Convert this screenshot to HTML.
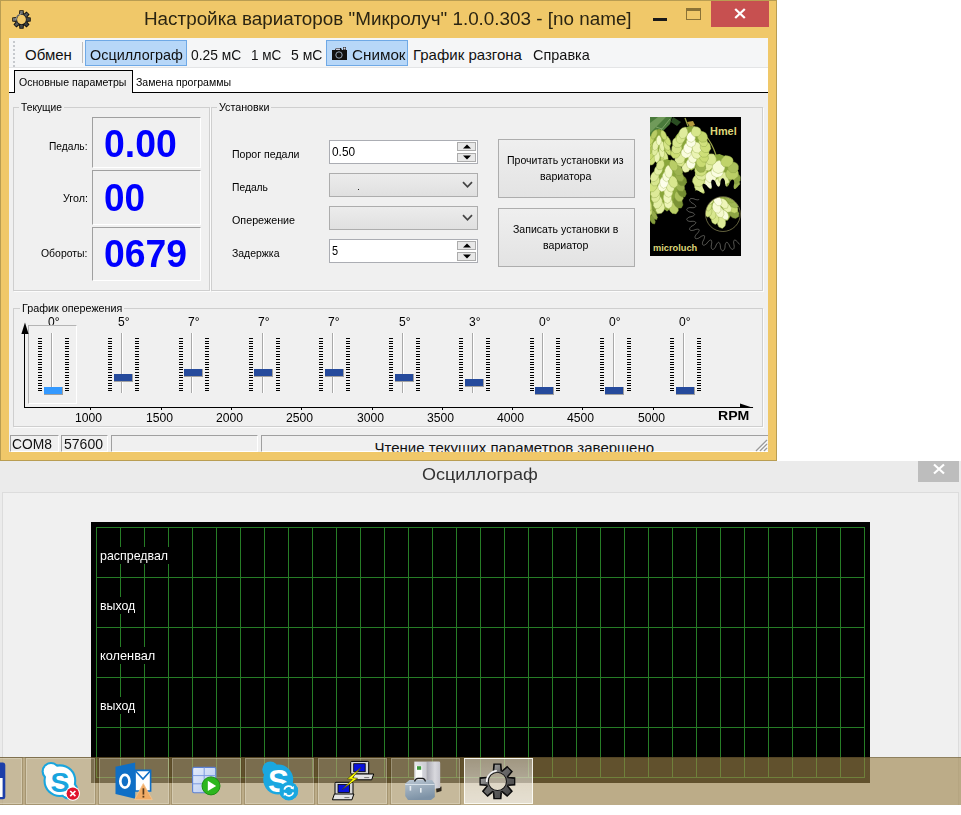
<!DOCTYPE html>
<html><head><meta charset="utf-8"><title>UI</title><style>
html,body{margin:0;padding:0;}
body{width:961px;height:815px;overflow:hidden;background:#fff;position:relative;font-family:"Liberation Sans",sans-serif;}
.b{position:absolute;box-sizing:border-box;}
.t{position:absolute;white-space:nowrap;transform-origin:0 0;font-family:"Liberation Sans",sans-serif;}
</style></head><body>
<div class="b" style="left:0px;top:461px;width:961px;height:354px;background:#EBEBEB;"></div>
<div class="b" style="left:2px;top:492px;width:957px;height:320px;background:#F0F0F0;border-top:1px solid #DCDCDC;border-left:1px solid #DCDCDC;border-right:1px solid #DCDCDC;"></div>
<span class="t" style="left:422.40px;top:466.32px;font-size:17.2px;line-height:17.2px;color:#333;transform:scaleX(1.0462);">Осциллограф</span>
<div class="b" style="left:918px;top:461px;width:41px;height:21px;background:#BDBDBD;"></div>
<svg class="b" style="left:932px;top:463px" width="14" height="12" viewBox="0 0 14 12"><path d="M2 1.5L12 10.5M12 1.5L2 10.5" stroke="#fff" stroke-width="2.2" fill="none"/></svg>
<div class="b" style="left:91px;top:522px;width:779px;height:261px;background:#000;"></div>
<svg class="b" style="left:91px;top:522px" width="779" height="261" viewBox="91 522 779 261" shape-rendering="crispEdges"><rect x="96" y="527" width="1" height="251" fill="#267D26"/><rect x="120" y="527" width="1" height="251" fill="#267D26"/><rect x="144" y="527" width="1" height="251" fill="#267D26"/><rect x="168" y="527" width="1" height="251" fill="#267D26"/><rect x="192" y="527" width="1" height="251" fill="#267D26"/><rect x="216" y="527" width="1" height="251" fill="#267D26"/><rect x="240" y="527" width="1" height="251" fill="#267D26"/><rect x="264" y="527" width="1" height="251" fill="#267D26"/><rect x="288" y="527" width="1" height="251" fill="#267D26"/><rect x="312" y="527" width="1" height="251" fill="#267D26"/><rect x="336" y="527" width="1" height="251" fill="#267D26"/><rect x="360" y="527" width="1" height="251" fill="#267D26"/><rect x="384" y="527" width="1" height="251" fill="#267D26"/><rect x="408" y="527" width="1" height="251" fill="#267D26"/><rect x="432" y="527" width="1" height="251" fill="#267D26"/><rect x="456" y="527" width="1" height="251" fill="#267D26"/><rect x="480" y="527" width="1" height="251" fill="#267D26"/><rect x="504" y="527" width="1" height="251" fill="#267D26"/><rect x="528" y="527" width="1" height="251" fill="#267D26"/><rect x="552" y="527" width="1" height="251" fill="#267D26"/><rect x="576" y="527" width="1" height="251" fill="#267D26"/><rect x="600" y="527" width="1" height="251" fill="#267D26"/><rect x="624" y="527" width="1" height="251" fill="#267D26"/><rect x="648" y="527" width="1" height="251" fill="#267D26"/><rect x="672" y="527" width="1" height="251" fill="#267D26"/><rect x="696" y="527" width="1" height="251" fill="#267D26"/><rect x="720" y="527" width="1" height="251" fill="#267D26"/><rect x="744" y="527" width="1" height="251" fill="#267D26"/><rect x="768" y="527" width="1" height="251" fill="#267D26"/><rect x="792" y="527" width="1" height="251" fill="#267D26"/><rect x="816" y="527" width="1" height="251" fill="#267D26"/><rect x="840" y="527" width="1" height="251" fill="#267D26"/><rect x="864" y="527" width="1" height="251" fill="#267D26"/><rect x="96" y="527" width="769" height="1" fill="#267D26"/><rect x="96" y="577" width="769" height="1" fill="#267D26"/><rect x="96" y="627" width="769" height="1" fill="#267D26"/><rect x="96" y="677" width="769" height="1" fill="#267D26"/><rect x="96" y="727" width="769" height="1" fill="#267D26"/><rect x="96" y="777" width="769" height="1" fill="#267D26"/></svg>
<div class="b" style="left:97px;top:547px;width:74.69999999999999px;height:17px;background:#000;"></div>
<span class="t" style="left:99.60px;top:548.84px;font-size:13.2px;line-height:13.2px;color:#fff;transform:scaleX(0.9409);">распредвал</span>
<div class="b" style="left:97px;top:597px;width:42px;height:17px;background:#000;"></div>
<span class="t" style="left:99.60px;top:598.84px;font-size:13.2px;line-height:13.2px;color:#fff;transform:scaleX(0.9377);">выход</span>
<div class="b" style="left:97px;top:647px;width:62px;height:17px;background:#000;"></div>
<span class="t" style="left:99.60px;top:648.84px;font-size:13.2px;line-height:13.2px;color:#fff;transform:scaleX(0.9677);">коленвал</span>
<div class="b" style="left:97px;top:697px;width:42px;height:17px;background:#000;"></div>
<span class="t" style="left:99.60px;top:698.84px;font-size:13.2px;line-height:13.2px;color:#fff;transform:scaleX(0.9377);">выход</span>
<div class="b" style="left:0px;top:0px;width:777px;height:461px;background:#F0C869;border:1px solid #B99D52;"></div>
<span class="t" style="left:144.10px;top:11.37px;font-size:17.5px;line-height:17.5px;color:#2a2412;transform:scaleX(1.0771);">Настройка вариаторов "Микролуч" 1.0.0.303 - [no name]</span>
<div class="b" style="left:653px;top:18px;width:14px;height:3px;background:#1a1a1a;"></div>
<div class="b" style="left:686px;top:8px;width:15px;height:12px;border:1px solid #8a7236;border-top:3px solid #8a7236;"></div>
<div class="b" style="left:711px;top:1px;width:58px;height:26px;background:#C75050;"></div>
<svg class="b" style="left:733px;top:7px" width="14" height="13" viewBox="0 0 14 13"><path d="M2.2 2L11.8 11M11.8 2L2.2 11" stroke="#fff" stroke-width="2.3" fill="none"/></svg>
<svg class="b" style="left:10.00px;top:7.90px" width="23.00" height="23.00" viewBox="10.00 7.90 23.00 23.00"><defs><linearGradient id="gg1" x1="0" y1="0" x2="1" y2="1"><stop offset="0" stop-color="#b0b4b4"/><stop offset="0.4" stop-color="#5a5e5e"/><stop offset="1" stop-color="#2a2c2c"/></linearGradient></defs><path d="M19.07 13.98 L19.39 10.14 L23.61 10.14 L23.93 13.98 L23.82 13.94 L23.72 13.89 L23.61 13.85 L26.56 11.36 L29.54 14.34 L27.05 17.29 L27.01 17.18 L26.96 17.08 L26.92 16.97 L30.76 17.29 L30.76 21.51 L26.92 21.83 L26.96 21.72 L27.01 21.62 L27.05 21.51 L29.54 24.46 L26.56 27.44 L23.61 24.95 L23.72 24.91 L23.82 24.86 L23.93 24.82 L23.61 28.66 L19.39 28.66 L19.07 24.82 L19.18 24.86 L19.28 24.91 L19.39 24.95 L16.44 27.44 L13.46 24.46 L15.95 21.51 L15.99 21.62 L16.04 21.72 L16.08 21.83 L12.24 21.51 L12.24 17.29 L16.08 16.97 L16.04 17.08 L15.99 17.18 L15.95 17.29 L17.30 15.20 L19.39 13.85 L19.28 13.89 L19.18 13.94ZM17.07 19.40a4.43 4.43 0 1 0 8.85 0a4.43 4.43 0 1 0 -8.85 0Z" fill="#0c0c0c" fill-rule="evenodd"/><path d="M19.97 14.18 L20.29 10.88 L22.71 10.88 L23.03 14.18 L23.40 14.30 L23.76 14.45 L24.11 14.63 L26.67 12.53 L28.37 14.23 L26.27 16.79 L26.45 17.14 L26.60 17.50 L26.72 17.87 L30.02 18.19 L30.02 20.61 L26.72 20.93 L26.60 21.30 L26.45 21.66 L26.27 22.01 L28.37 24.57 L26.67 26.27 L24.11 24.17 L23.76 24.35 L23.40 24.50 L23.03 24.62 L22.71 27.92 L20.29 27.92 L19.97 24.62 L19.60 24.50 L19.24 24.35 L18.89 24.17 L16.33 26.27 L14.63 24.57 L16.73 22.01 L16.55 21.66 L16.40 21.30 L16.28 20.93 L12.98 20.61 L12.98 18.19 L16.28 17.87 L16.40 17.50 L16.55 17.14 L16.73 16.79 L17.65 15.55 L18.89 14.63 L19.24 14.45 L19.60 14.30ZM16.53 19.40a4.97 4.97 0 1 0 9.93 0a4.97 4.97 0 1 0 -9.93 0Z" fill="url(#gg1)" fill-rule="evenodd"/><path d="M15.98 19.70A5.52 5.52 0 0 1 21.20 13.88" stroke="#fff" stroke-width="0.90" fill="none" opacity="0.55"/></svg>
<div class="b" style="left:9px;top:38px;width:759px;height:414px;background:#F0F0F0;"></div>
<div class="b" style="left:9px;top:38px;width:759px;height:30px;background:#F5F6F7;border-bottom:1px solid #E4E5E6;"></div>
<div class="b" style="left:13px;top:41px;width:2px;height:2px;background:#C6C9CD;"></div>
<div class="b" style="left:13px;top:45px;width:2px;height:2px;background:#C6C9CD;"></div>
<div class="b" style="left:13px;top:49px;width:2px;height:2px;background:#C6C9CD;"></div>
<div class="b" style="left:13px;top:53px;width:2px;height:2px;background:#C6C9CD;"></div>
<div class="b" style="left:13px;top:57px;width:2px;height:2px;background:#C6C9CD;"></div>
<div class="b" style="left:13px;top:61px;width:2px;height:2px;background:#C6C9CD;"></div>
<div class="b" style="left:13px;top:65px;width:2px;height:2px;background:#C6C9CD;"></div>
<div class="b" style="left:82px;top:42px;width:1px;height:21px;background:#BDBDBD;"></div>
<div class="b" style="left:85px;top:40px;width:102px;height:26px;background:#B7D7F8;border:1px solid #6FA9E6;"></div>
<div class="b" style="left:326px;top:40px;width:82px;height:26px;background:#B7D7F8;border:1px solid #6FA9E6;"></div>
<span class="t" style="left:25.00px;top:46.64px;font-size:15px;line-height:15px;color:#111;">Обмен</span>
<span class="t" style="left:90.30px;top:46.64px;font-size:15px;line-height:15px;color:#111;transform:scaleX(0.9594);">Осциллограф</span>
<span class="t" style="left:191.30px;top:46.64px;font-size:15px;line-height:15px;color:#111;transform:scaleX(0.9211);">0.25 мС</span>
<span class="t" style="left:251.40px;top:46.64px;font-size:15px;line-height:15px;color:#111;transform:scaleX(0.9011);">1 мС</span>
<span class="t" style="left:290.70px;top:46.64px;font-size:15px;line-height:15px;color:#111;transform:scaleX(0.9309);">5 мС</span>
<span class="t" style="left:351.50px;top:46.64px;font-size:15px;line-height:15px;color:#111;transform:scaleX(1.0156);">Снимок</span>
<span class="t" style="left:413.00px;top:46.64px;font-size:15px;line-height:15px;color:#111;">График разгона</span>
<span class="t" style="left:533.20px;top:46.64px;font-size:15px;line-height:15px;color:#111;transform:scaleX(0.9648);">Справка</span>
<svg class="b" style="left:331px;top:46px" width="17" height="15" viewBox="0 0 17 15"><path d="M1 4h3l1-2h5l1 2h1V1h3v3h1v10H1z" fill="#111"/><circle cx="8" cy="9" r="3.2" fill="#111" stroke="#9ab" stroke-width="1"/><rect x="12.5" y="1.5" width="2" height="2" fill="#dde"/><rect x="5" y="2.5" width="4" height="1.5" fill="#ccd"/></svg>
<div class="b" style="left:9px;top:68px;width:759px;height:24px;background:#fff;"></div>
<div class="b" style="left:14px;top:70px;width:119px;height:23px;background:#F0F0F0;border:1px solid #000;border-bottom:none;"></div>
<div class="b" style="left:9px;top:92px;width:6px;height:1px;background:#000;"></div>
<div class="b" style="left:132px;top:92px;width:636px;height:1px;background:#000;"></div>
<span class="t" style="left:19.00px;top:76.86px;font-size:11px;line-height:11px;color:#000;transform:scaleX(0.9591);">Основные параметры</span>
<span class="t" style="left:136.00px;top:76.86px;font-size:11px;line-height:11px;color:#000;transform:scaleX(0.9584);">Замена программы</span>
<div class="b" style="left:13px;top:107px;width:197px;height:184px;border:1px solid #CFCFCF;box-shadow:1px 1px 0 rgba(255,255,255,0.8);"></div>
<div class="b" style="left:19px;top:101px;width:45px;height:13px;background:#F0F0F0;"></div>
<span class="t" style="left:21.00px;top:101.86px;font-size:11px;line-height:11px;color:#000;transform:scaleX(0.9318);">Текущие</span>
<div class="b" style="left:211px;top:107px;width:552px;height:184px;border:1px solid #CFCFCF;box-shadow:1px 1px 0 rgba(255,255,255,0.8);"></div>
<div class="b" style="left:216.6px;top:101px;width:54.400000000000006px;height:13px;background:#F0F0F0;"></div>
<span class="t" style="left:218.60px;top:101.86px;font-size:11px;line-height:11px;color:#000;transform:scaleX(0.9739);">Установки</span>
<div class="b" style="left:13px;top:308px;width:750px;height:119px;border:1px solid #CFCFCF;box-shadow:1px 1px 0 rgba(255,255,255,0.8);"></div>
<div class="b" style="left:19.6px;top:302px;width:104.4px;height:13px;background:#F0F0F0;"></div>
<span class="t" style="left:21.60px;top:302.86px;font-size:11px;line-height:11px;color:#000;transform:scaleX(0.9783);">График опережения</span>
<div class="b" style="left:92px;top:117px;width:109px;height:51px;border-top:1px solid #A0A0A0;border-left:1px solid #A0A0A0;border-right:1px solid #fff;border-bottom:1px solid #fff;"></div>
<div class="b" style="left:92px;top:170px;width:109px;height:55px;border-top:1px solid #A0A0A0;border-left:1px solid #A0A0A0;border-right:1px solid #fff;border-bottom:1px solid #fff;"></div>
<div class="b" style="left:92px;top:227px;width:109px;height:54px;border-top:1px solid #A0A0A0;border-left:1px solid #A0A0A0;border-right:1px solid #fff;border-bottom:1px solid #fff;"></div>
<span class="t" style="left:104.40px;top:125.34px;font-size:38px;line-height:38px;color:#0000FF;font-weight:bold;transform:scaleX(0.9838);">0.00</span>
<span class="t" style="left:104.40px;top:179.04px;font-size:38px;line-height:38px;color:#0000FF;font-weight:bold;transform:scaleX(0.9704);">00</span>
<span class="t" style="left:104.40px;top:234.74px;font-size:38px;line-height:38px;color:#0000FF;font-weight:bold;transform:scaleX(0.9822);">0679</span>
<span class="t" style="left:49.00px;top:141.36px;font-size:11px;line-height:11px;color:#000;transform:scaleX(0.9277);">Педаль:</span>
<span class="t" style="left:62.60px;top:192.86px;font-size:11px;line-height:11px;color:#000;transform:scaleX(0.9717);">Угол:</span>
<span class="t" style="left:41.00px;top:247.86px;font-size:11px;line-height:11px;color:#000;transform:scaleX(0.9490);">Обороты:</span>
<span class="t" style="left:231.50px;top:149.16px;font-size:11px;line-height:11px;color:#000;transform:scaleX(0.9609);">Порог педали</span>
<span class="t" style="left:231.50px;top:181.86px;font-size:11px;line-height:11px;color:#000;transform:scaleX(0.9351);">Педаль</span>
<span class="t" style="left:231.50px;top:214.86px;font-size:11px;line-height:11px;color:#000;transform:scaleX(0.9767);">Опережение</span>
<span class="t" style="left:231.50px;top:247.86px;font-size:11px;line-height:11px;color:#000;transform:scaleX(0.9500);">Задержка</span>
<div class="b" style="left:329px;top:140px;width:149px;height:24px;background:#fff;border:1px solid #ABADB3;"></div>
<div class="b" style="left:457px;top:142px;width:19px;height:9px;background:#E8E8E8;border:1px solid #ACACAC;"></div>
<div class="b" style="left:457px;top:153px;width:19px;height:9px;background:#E8E8E8;border:1px solid #ACACAC;"></div>
<svg class="b" style="left:463px;top:144px" width="8" height="5" viewBox="0 0 8 5"><path d="M0 4.5L4 0.5L8 4.5Z" fill="#000"/></svg>
<svg class="b" style="left:463px;top:155px" width="8" height="5" viewBox="0 0 8 5"><path d="M0 0.5L4 4.5L8 0.5Z" fill="#000"/></svg>
<span class="t" style="left:332.40px;top:144.90px;font-size:13px;line-height:13px;color:#000;transform:scaleX(0.9109);">0.50</span>
<div class="b" style="left:329px;top:239px;width:149px;height:24px;background:#fff;border:1px solid #ABADB3;"></div>
<div class="b" style="left:457px;top:241px;width:19px;height:9px;background:#E8E8E8;border:1px solid #ACACAC;"></div>
<div class="b" style="left:457px;top:252px;width:19px;height:9px;background:#E8E8E8;border:1px solid #ACACAC;"></div>
<svg class="b" style="left:463px;top:243px" width="8" height="5" viewBox="0 0 8 5"><path d="M0 4.5L4 0.5L8 4.5Z" fill="#000"/></svg>
<svg class="b" style="left:463px;top:254px" width="8" height="5" viewBox="0 0 8 5"><path d="M0 0.5L4 4.5L8 0.5Z" fill="#000"/></svg>
<span class="t" style="left:332.40px;top:243.90px;font-size:13px;line-height:13px;color:#000;transform:scaleX(0.8414);">5</span>
<div class="b" style="left:329px;top:173px;width:149px;height:24px;background:linear-gradient(#ECECEC,#E0E0E0);border:1px solid #ADADAD;"></div>
<svg class="b" style="left:462px;top:181px" width="11" height="8" viewBox="0 0 11 8"><path d="M1 1.2L5.5 5.8L10 1.2" stroke="#444" stroke-width="1.7" fill="none"/></svg>
<div class="b" style="left:329px;top:206px;width:149px;height:24px;background:linear-gradient(#ECECEC,#E0E0E0);border:1px solid #ADADAD;"></div>
<svg class="b" style="left:462px;top:214px" width="11" height="8" viewBox="0 0 11 8"><path d="M1 1.2L5.5 5.8L10 1.2" stroke="#444" stroke-width="1.7" fill="none"/></svg>
<div class="b" style="left:358px;top:189px;width:1px;height:1px;background:#222;"></div>
<div class="b" style="left:498px;top:139px;width:137px;height:59px;background:linear-gradient(#EFEFEF,#E3E3E3);border:1px solid #ADADAD;"></div>
<span class="t" style="left:507.30px;top:155.46px;font-size:11px;line-height:11px;color:#000;transform:scaleX(0.9588);">Прочитать установки из</span>
<span class="t" style="left:540.40px;top:171.16px;font-size:11px;line-height:11px;color:#000;transform:scaleX(0.9653);">вариатора</span>
<div class="b" style="left:498px;top:208px;width:137px;height:59px;background:linear-gradient(#EFEFEF,#E3E3E3);border:1px solid #ADADAD;"></div>
<span class="t" style="left:512.80px;top:224.46px;font-size:11px;line-height:11px;color:#000;transform:scaleX(0.9584);">Записать установки в</span>
<span class="t" style="left:543.40px;top:240.16px;font-size:11px;line-height:11px;color:#000;transform:scaleX(0.9634);">вариатор</span>
<svg class="b" style="left:650px;top:117px" width="91" height="139" viewBox="0 0 91 139"><defs><filter id="hb" x="-5%" y="-5%" width="110%" height="110%"><feGaussianBlur stdDeviation="0.5"/></filter><clipPath id="hc"><circle cx="72.9" cy="97.1" r="17.2"/></clipPath><clipPath id="hall"><rect width="91" height="139"/></clipPath></defs><rect width="91" height="139" fill="#000"/><g clip-path="url(#hall)"><g filter="url(#hb)"><path d="M0 0H22L20 7L13 14L6 22L0 26Z" fill="#4a7a3a"/><path d="M0 6L8 0H16L0 16Z" fill="#6f9a5a"/><path d="M2 24L20 2M6 10L12 12M4 16L9 17" stroke="#9dbd86" stroke-width="0.6" fill="none"/><path d="M23 0L31 5L27 9L21 5Z" fill="#2b4d24"/><path d="M35 1L38 9M41 9Q58 14 66 38M13 22L16 45" stroke="#97a048" stroke-width="1.3" fill="none"/><path d="M37 5l6 -1l2 4l-5 2z" fill="#b39a3c"/><path d="M-4.0 70.0 L-6.2 71.2 L-7.4 72.3 L-8.4 73.5 L-9.2 74.7 L-9.9 75.8 L-10.5 77.0 L-10.9 78.1 L-11.3 79.3 L-11.7 80.5 L-11.9 81.6 L-12.1 82.8 L-12.2 84.0 L-12.3 85.1 L-12.3 86.3 L-12.2 87.5 L-12.1 88.6 L-11.9 89.8 L-11.6 91.0 L-11.3 92.1 L-11.0 93.3 L-10.6 94.4 L-10.1 95.6 L-9.6 96.8 L-9.0 97.9 L-8.4 99.1 L-7.8 100.3 L-7.1 101.4 L-6.3 102.6 L-5.4 103.8 L-4.0 104.9 L-4.0 104.9 L-2.6 103.8 L-1.7 102.6 L-0.9 101.4 L-0.2 100.3 L0.4 99.1 L1.0 97.9 L1.6 96.8 L2.1 95.6 L2.6 94.4 L3.0 93.3 L3.3 92.1 L3.6 91.0 L3.9 89.8 L4.1 88.6 L4.2 87.5 L4.3 86.3 L4.3 85.1 L4.2 84.0 L4.1 82.8 L3.9 81.6 L3.7 80.5 L3.3 79.3 L2.9 78.1 L2.5 77.0 L1.9 75.8 L1.2 74.7 L0.4 73.5 L-0.6 72.3 L-1.8 71.2 L-4.0 70.0Z" fill="#8aa63a"/><path d="M-6.2 97.2Q-10.7 99.8 -11.4 107.1L-10.5 109.5L-8.3 108.2Q-4.2 102.0 -6.2 97.2Z" fill="#ecf4b5" stroke="#9ab04e" stroke-width="0.4"/><path d="M-0.7 97.2Q-2.2 101.8 2.3 106.4L4.6 107.1L5.3 104.8Q3.9 98.5 -0.7 97.2Z" fill="#859d3e" stroke="#7c9537" stroke-width="0.4"/><path d="M-8.3 91.9Q-12.7 93.5 -13.8 99.7L-13.1 101.9L-10.9 101.1Q-6.7 96.3 -8.3 91.9Z" fill="#e3eea2" stroke="#95ab4a" stroke-width="0.4"/><path d="M-4.3 91.9Q-7.6 95.5 -6.2 102.4L-4.8 104.4L-3.2 102.6Q-1.3 95.8 -4.3 91.9Z" fill="#f2f8c5" stroke="#9fb451" stroke-width="0.4"/><path d="M0.8 91.9Q-0.5 96.9 4.4 102.0L6.7 102.8L7.4 100.3Q5.7 93.5 0.8 91.9Z" fill="#95ab4a" stroke="#7f9739" stroke-width="0.4"/><path d="M-9.3 86.6Q-13.7 88.4 -15.3 95.1L-14.7 97.4L-12.6 96.5Q-8.1 91.3 -9.3 86.6Z" fill="#d5e486" stroke="#8da444" stroke-width="0.4"/><path d="M-5.6 86.6Q-9.5 89.4 -8.6 95.5L-7.2 97.4L-5.3 96.0Q-2.7 90.4 -5.6 86.6Z" fill="#f4f9cd" stroke="#a1b653" stroke-width="0.4"/><path d="M-1.8 86.6Q-4.6 90.9 -1.5 97.0L0.6 98.4L1.9 96.3Q2.4 89.5 -1.8 86.6Z" fill="#dbe892" stroke="#91a747" stroke-width="0.4"/><path d="M1.9 86.6Q0.8 91.4 5.5 96.2L7.8 96.9L8.3 94.6Q6.5 88.1 1.9 86.6Z" fill="#80983a" stroke="#7b9437" stroke-width="0.4"/><path d="M-8.9 81.4Q-13.8 83.3 -15.1 90.5L-14.4 93.0L-12.0 92.0Q-7.3 86.4 -8.9 81.4Z" fill="#e7f0ab" stroke="#97ad4c" stroke-width="0.4"/><path d="M-6.0 81.4Q-9.7 84.2 -9.2 90.7L-8.0 92.7L-6.2 91.2Q-3.5 85.3 -6.0 81.4Z" fill="#f5face" stroke="#a1b753" stroke-width="0.4"/><path d="M-1.9 81.4Q-4.5 85.8 -1.5 92.4L0.4 94.0L1.7 91.8Q2.1 84.5 -1.9 81.4Z" fill="#d6e588" stroke="#8ea545" stroke-width="0.4"/><path d="M1.9 81.4Q0.7 85.8 5.1 90.1L7.3 90.7L7.8 88.5Q6.3 82.5 1.9 81.4Z" fill="#88a041" stroke="#7d9538" stroke-width="0.4"/><path d="M-7.5 76.1Q-12.1 78.5 -13.0 85.9L-12.2 88.3L-10.0 87.1Q-5.7 81.0 -7.5 76.1Z" fill="#e7f1ab" stroke="#97ae4c" stroke-width="0.4"/><path d="M-3.8 76.1Q-7.1 79.9 -5.2 86.9L-3.6 88.7L-2.0 86.8Q-0.5 79.8 -3.8 76.1Z" fill="#ebf4b4" stroke="#9ab04e" stroke-width="0.4"/><path d="M0.5 76.1Q-0.9 81.2 4.1 86.8L6.6 87.7L7.2 85.2Q5.6 77.9 0.5 76.1Z" fill="#80983b" stroke="#7b9437" stroke-width="0.4"/><path d="M-6.4 70.8Q-10.7 72.4 -11.8 78.6L-11.2 80.8L-9.1 79.9Q-5.0 75.1 -6.4 70.8Z" fill="#dbe892" stroke="#91a747" stroke-width="0.4"/><path d="M-1.6 70.8Q-3.2 75.5 1.2 80.8L3.5 81.8L4.2 79.4Q3.0 72.6 -1.6 70.8Z" fill="#879e3f" stroke="#7c9537" stroke-width="0.4"/><path d="M9.0 12.0 L6.2 13.0 L4.7 14.1 L3.5 15.1 L2.4 16.2 L1.5 17.3 L0.8 18.4 L0.1 19.5 L-0.4 20.6 L-0.9 21.7 L-1.2 22.8 L-1.5 23.9 L-1.7 25.1 L-1.8 26.2 L-1.9 27.3 L-1.8 28.5 L-1.7 29.6 L-1.6 30.7 L-1.3 31.9 L-1.0 33.0 L-0.6 34.2 L-0.2 35.3 L0.3 36.5 L0.9 37.7 L1.5 38.8 L2.2 40.0 L2.9 41.2 L3.7 42.3 L4.6 43.5 L5.7 44.7 L7.3 45.9 L7.3 45.9 L9.0 44.9 L10.2 43.8 L11.2 42.7 L12.1 41.6 L13.0 40.5 L13.8 39.4 L14.5 38.3 L15.2 37.2 L15.8 36.1 L16.4 35.0 L16.9 33.9 L17.3 32.8 L17.6 31.7 L17.9 30.6 L18.1 29.5 L18.3 28.3 L18.4 27.2 L18.4 26.1 L18.3 24.9 L18.1 23.8 L17.9 22.6 L17.5 21.5 L17.1 20.3 L16.5 19.2 L15.9 18.0 L15.1 16.8 L14.2 15.7 L13.1 14.5 L11.7 13.3 L9.0 12.0Z" fill="#8aa63a"/><path d="M4.8 38.3Q-0.5 39.5 -0.8 45.9L0.5 48.2L3.1 47.5Q7.5 43.0 4.8 38.3Z" fill="#cfe07b" stroke="#8aa242" stroke-width="0.4"/><path d="M11.4 38.6Q9.0 43.2 13.3 47.9L15.8 48.7L16.9 46.4Q16.4 40.0 11.4 38.6Z" fill="#cadc73" stroke="#88a040" stroke-width="0.4"/><path d="M3.1 33.0Q-2.5 34.0 -3.2 40.5L-2.0 43.0L0.7 42.5Q5.6 38.1 3.1 33.0Z" fill="#c7da70" stroke="#889f40" stroke-width="0.4"/><path d="M7.6 33.3Q3.0 36.7 4.7 43.7L6.7 45.7L8.9 44.0Q11.7 37.3 7.6 33.3Z" fill="#ebf4b4" stroke="#9ab04e" stroke-width="0.4"/><path d="M12.9 33.5Q10.3 38.1 14.5 42.9L16.9 43.8L18.1 41.5Q17.8 35.1 12.9 33.5Z" fill="#d7e68b" stroke="#8fa646" stroke-width="0.4"/><path d="M2.5 27.9Q-2.5 29.1 -3.4 35.5L-2.5 37.9L-0.1 37.2Q4.4 32.6 2.5 27.9Z" fill="#b2c660" stroke="#849c3d" stroke-width="0.4"/><path d="M6.1 28.0Q1.2 30.4 2.1 36.8L3.8 38.9L6.2 37.7Q9.6 32.2 6.1 28.0Z" fill="#e1ed9f" stroke="#94ab4a" stroke-width="0.4"/><path d="M10.8 28.3Q7.2 32.7 10.3 39.3L12.6 40.9L14.3 38.7Q15.5 31.5 10.8 28.3Z" fill="#e7f0ab" stroke="#97ad4c" stroke-width="0.4"/><path d="M15.4 28.5Q13.5 33.2 18.0 37.6L20.5 38.2L21.4 35.9Q20.4 29.6 15.4 28.5Z" fill="#cadc72" stroke="#88a040" stroke-width="0.4"/><path d="M2.3 22.7Q-2.7 23.8 -3.8 30.1L-2.9 32.5L-0.5 31.9Q4.2 27.5 2.3 22.7Z" fill="#bfd26a" stroke="#869e3f" stroke-width="0.4"/><path d="M6.5 22.9Q1.4 25.3 2.6 31.7L4.5 33.7L7.0 32.5Q10.4 27.0 6.5 22.9Z" fill="#e8f1ad" stroke="#98ae4c" stroke-width="0.4"/><path d="M11.1 23.2Q7.8 27.1 10.7 33.1L12.8 34.5L14.4 32.5Q15.5 26.0 11.1 23.2Z" fill="#e8f2ae" stroke="#98ae4d" stroke-width="0.4"/><path d="M14.5 23.3Q11.7 28.1 16.1 32.8L18.7 33.5L20.1 31.2Q19.8 24.7 14.5 23.3Z" fill="#d5e487" stroke="#8ea545" stroke-width="0.4"/><path d="M3.8 17.6Q-1.5 19.0 -2.6 25.7L-1.7 28.2L0.9 27.5Q5.7 22.7 3.8 17.6Z" fill="#c6d86f" stroke="#879f40" stroke-width="0.4"/><path d="M9.0 17.9Q4.9 21.0 6.9 26.9L8.8 28.6L10.7 27.0Q12.9 21.2 9.0 17.9Z" fill="#f3f9c8" stroke="#9fb552" stroke-width="0.4"/><path d="M14.7 18.2Q12.7 23.2 17.6 28.1L20.1 28.8L21.1 26.4Q20.0 19.6 14.7 18.2Z" fill="#ccde74" stroke="#89a041" stroke-width="0.4"/><path d="M6.5 12.6Q1.5 13.9 1.0 20.0L2.1 22.2L4.6 21.6Q8.9 17.2 6.5 12.6Z" fill="#b9cc65" stroke="#859d3e" stroke-width="0.4"/><path d="M11.6 12.9Q8.9 17.4 13.0 22.3L15.5 23.1L16.8 20.9Q16.6 14.5 11.6 12.9Z" fill="#cbdd73" stroke="#88a041" stroke-width="0.4"/><path d="M69.5 37.0 L63.5 37.9 L60.2 39.1 L57.5 40.4 L55.3 41.8 L53.3 43.2 L51.6 44.6 L50.1 46.1 L48.9 47.5 L47.9 49.0 L47.0 50.6 L46.3 52.1 L45.8 53.7 L45.5 55.3 L45.4 56.9 L45.4 58.5 L45.5 60.2 L45.8 61.8 L46.3 63.5 L46.9 65.2 L47.6 66.9 L48.4 68.7 L49.4 70.4 L50.5 72.2 L51.8 73.9 L53.1 75.7 L54.7 77.5 L56.3 79.4 L58.2 81.2 L60.4 83.1 L63.7 85.2 L63.7 85.2 L67.4 84.0 L70.0 82.7 L72.2 81.3 L74.3 79.9 L76.2 78.5 L77.9 77.1 L79.6 75.7 L81.1 74.2 L82.4 72.8 L83.7 71.3 L84.8 69.8 L85.8 68.3 L86.6 66.7 L87.3 65.2 L87.8 63.6 L88.2 62.1 L88.4 60.5 L88.5 58.8 L88.4 57.2 L88.1 55.5 L87.7 53.8 L87.0 52.1 L86.1 50.4 L85.1 48.6 L83.8 46.9 L82.2 45.0 L80.3 43.2 L78.0 41.3 L75.1 39.3 L69.5 37.0Z" fill="#8aa63a"/><path d="M59.9 75.5Q49.6 74.6 51.2 82.8L54.7 86.4L59.8 86.8Q67.2 82.9 59.9 75.5Z" fill="#e4eea5" stroke="#96ac4b" stroke-width="0.4"/><path d="M72.9 77.0Q66.0 84.3 73.3 88.9L78.1 88.9L81.4 85.3Q82.8 76.9 72.9 77.0Z" fill="#9bb14f" stroke="#80983a" stroke-width="0.4"/><path d="M54.8 69.3Q44.9 66.5 45.4 74.5L48.3 78.6L53.2 79.9Q60.9 77.7 54.8 69.3Z" fill="#cedf78" stroke="#89a141" stroke-width="0.4"/><path d="M65.8 70.6Q56.3 73.1 60.4 79.7L64.7 81.9L69.3 80.6Q74.7 74.9 65.8 70.6Z" fill="#fafcdf" stroke="#a6bb57" stroke-width="0.4"/><path d="M75.4 71.8Q67.2 78.5 74.2 83.0L79.3 83.1L83.3 79.9Q85.9 71.9 75.4 71.8Z" fill="#bed169" stroke="#869e3f" stroke-width="0.4"/><path d="M54.4 63.7Q44.1 61.9 44.5 70.6L47.5 74.8L52.5 75.7Q60.6 72.2 54.4 63.7Z" fill="#dbe993" stroke="#91a847" stroke-width="0.4"/><path d="M68.1 65.4Q58.2 68.9 62.9 76.4L67.5 78.6L72.3 76.8Q77.7 69.8 68.1 65.4Z" fill="#f3f9ca" stroke="#a0b552" stroke-width="0.4"/><path d="M79.3 66.7Q71.8 74.1 79.2 79.1L84.4 79.3L88.0 75.6Q89.9 66.9 79.3 66.7Z" fill="#abc05b" stroke="#839b3c" stroke-width="0.4"/><path d="M52.5 57.9Q42.7 56.0 42.4 64.8L44.9 68.9L49.6 69.8Q57.7 66.5 52.5 57.9Z" fill="#d9e78e" stroke="#90a646" stroke-width="0.4"/><path d="M62.4 59.1Q52.5 60.4 55.2 68.4L59.0 71.4L63.8 70.7Q70.3 65.3 62.4 59.1Z" fill="#f7fbd7" stroke="#a3b955" stroke-width="0.4"/><path d="M70.4 60.1Q60.7 64.2 65.7 71.8L70.4 73.8L75.1 71.8Q80.1 64.2 70.4 60.1Z" fill="#eff6bc" stroke="#9cb250" stroke-width="0.4"/><path d="M81.4 61.4Q74.3 68.5 81.4 73.4L86.3 73.6L89.6 70.1Q91.4 61.7 81.4 61.4Z" fill="#9db350" stroke="#80983a" stroke-width="0.4"/><path d="M54.3 52.6Q44.4 50.4 45.2 58.4L48.1 62.3L52.9 63.3Q60.4 60.6 54.3 52.6Z" fill="#dfeb9b" stroke="#93aa49" stroke-width="0.4"/><path d="M62.7 53.6Q53.4 54.9 55.8 62.7L59.2 65.6L63.7 64.9Q69.9 59.6 62.7 53.6Z" fill="#f8fbda" stroke="#a4ba56" stroke-width="0.4"/><path d="M73.9 55.0Q64.5 59.8 70.3 66.3L75.2 67.7L79.7 65.3Q84.0 57.8 73.9 55.0Z" fill="#e1eda0" stroke="#94ab4a" stroke-width="0.4"/><path d="M82.2 56.0Q74.9 62.8 81.8 67.1L86.7 67.1L90.2 63.8Q92.3 55.8 82.2 56.0Z" fill="#8ca343" stroke="#7d9638" stroke-width="0.4"/><path d="M54.8 47.1Q44.8 45.2 44.6 54.0L47.1 58.3L52.0 59.2Q60.2 55.8 54.8 47.1Z" fill="#d0e17d" stroke="#8ba243" stroke-width="0.4"/><path d="M67.9 48.7Q58.2 51.2 62.2 58.3L66.4 60.7L71.1 59.5Q76.8 53.5 67.9 48.7Z" fill="#fbfde2" stroke="#a7bc58" stroke-width="0.4"/><path d="M79.9 50.2Q71.8 57.0 78.9 62.4L84.0 62.8L87.9 59.4Q90.5 51.0 79.9 50.2Z" fill="#bace66" stroke="#859d3e" stroke-width="0.4"/><path d="M60.5 42.3Q51.0 41.6 51.7 49.8L54.5 53.5L59.1 53.8Q66.4 49.7 60.5 42.3Z" fill="#e2eda0" stroke="#94ab4a" stroke-width="0.4"/><path d="M69.3 43.3Q59.3 46.4 63.5 54.2L68.0 56.6L72.8 55.1Q78.5 48.3 69.3 43.3Z" fill="#f5fad1" stroke="#a2b754" stroke-width="0.4"/><path d="M80.6 44.7Q74.3 51.4 81.0 55.6L85.4 55.7L88.4 52.4Q89.8 44.6 80.6 44.7Z" fill="#abc05b" stroke="#839b3c" stroke-width="0.4"/><path d="M63.8 37.1Q54.4 35.6 55.0 43.6L57.8 47.3L62.4 48.0Q69.6 44.7 63.8 37.1Z" fill="#dae891" stroke="#90a747" stroke-width="0.4"/><path d="M75.1 38.5Q67.0 44.8 73.7 49.7L78.7 50.0L82.6 46.9Q85.4 39.1 75.1 38.5Z" fill="#c0d36b" stroke="#869e3f" stroke-width="0.4"/><path d="M39.5 9.0 L34.9 10.7 L32.4 12.3 L30.4 13.8 L28.8 15.4 L27.4 16.9 L26.2 18.5 L25.3 20.0 L24.5 21.5 L23.8 23.0 L23.4 24.5 L23.0 26.0 L22.9 27.5 L22.8 29.0 L22.9 30.5 L23.1 32.0 L23.5 33.5 L23.9 34.9 L24.5 36.4 L25.2 37.9 L26.0 39.3 L26.9 40.8 L27.9 42.2 L29.1 43.7 L30.3 45.1 L31.6 46.5 L33.1 48.0 L34.6 49.4 L36.4 50.8 L38.4 52.2 L41.3 53.6 L41.3 53.6 L44.1 52.0 L46.0 50.4 L47.6 48.9 L49.0 47.3 L50.4 45.8 L51.6 44.2 L52.7 42.7 L53.7 41.2 L54.6 39.7 L55.4 38.1 L56.1 36.6 L56.6 35.1 L57.1 33.6 L57.4 32.1 L57.7 30.6 L57.8 29.1 L57.7 27.6 L57.6 26.1 L57.3 24.7 L56.8 23.2 L56.2 21.7 L55.5 20.3 L54.6 18.8 L53.5 17.4 L52.2 15.9 L50.7 14.5 L48.9 13.1 L46.9 11.7 L44.3 10.3 L39.5 9.0Z" fill="#8aa63a"/><path d="M37.4 45.3Q30.2 46.7 32.1 53.2L34.9 55.5L38.3 54.7Q43.1 50.0 37.4 45.3Z" fill="#ebf3b3" stroke="#99b04e" stroke-width="0.4"/><path d="M47.4 44.9Q43.1 51.9 49.9 55.4L53.8 55.0L55.9 51.5Q55.6 43.9 47.4 44.9Z" fill="#9eb451" stroke="#80983b" stroke-width="0.4"/><path d="M32.3 40.4Q24.9 40.4 25.7 47.1L28.0 49.9L31.6 49.8Q37.2 46.1 32.3 40.4Z" fill="#d7e58a" stroke="#8ea545" stroke-width="0.4"/><path d="M40.7 40.1Q33.9 44.0 37.7 50.6L41.1 52.3L44.4 50.4Q47.7 43.5 40.7 40.1Z" fill="#fbfde5" stroke="#a7bc58" stroke-width="0.4"/><path d="M48.3 39.8Q43.4 46.2 49.7 50.3L53.6 50.3L55.9 47.2Q56.3 39.7 48.3 39.8Z" fill="#c9db72" stroke="#889f40" stroke-width="0.4"/><path d="M32.1 35.4Q23.4 36.1 24.9 43.8L27.9 46.8L32.1 46.4Q38.3 41.6 32.1 35.4Z" fill="#e0ec9c" stroke="#93aa49" stroke-width="0.4"/><path d="M42.1 35.0Q35.7 39.1 39.9 45.0L43.3 46.3L46.4 44.3Q49.2 37.6 42.1 35.0Z" fill="#f7fbd6" stroke="#a3b955" stroke-width="0.4"/><path d="M50.7 34.6Q46.5 41.1 52.8 45.1L56.5 45.1L58.5 41.9Q58.4 34.4 50.7 34.6Z" fill="#cadc72" stroke="#88a040" stroke-width="0.4"/><path d="M28.4 30.5Q20.3 30.4 20.7 38.0L23.1 41.2L27.1 41.1Q33.4 36.9 28.4 30.5Z" fill="#cdde75" stroke="#89a041" stroke-width="0.4"/><path d="M36.8 30.1Q28.7 32.6 32.0 39.2L35.5 41.3L39.4 40.0Q44.1 34.3 36.8 30.1Z" fill="#fafcdf" stroke="#a6bb57" stroke-width="0.4"/><path d="M45.0 29.8Q38.5 35.2 43.9 41.0L47.9 41.9L51.1 39.3Q53.3 31.7 45.0 29.8Z" fill="#eaf3b2" stroke="#99af4d" stroke-width="0.4"/><path d="M51.0 29.6Q45.7 36.4 52.3 40.2L56.5 40.0L59.1 36.6Q59.6 29.0 51.0 29.6Z" fill="#cedf78" stroke="#8aa142" stroke-width="0.4"/><path d="M29.3 25.4Q20.7 25.7 21.7 33.5L24.4 36.7L28.5 36.5Q34.9 31.9 29.3 25.4Z" fill="#d7e58a" stroke="#8ea545" stroke-width="0.4"/><path d="M38.2 25.0Q31.2 28.3 34.5 34.9L37.7 36.8L41.1 35.2Q44.9 28.8 38.2 25.0Z" fill="#fdfee9" stroke="#a9be59" stroke-width="0.4"/><path d="M45.5 24.7Q39.0 30.1 44.5 35.4L48.5 36.1L51.6 33.5Q53.7 26.2 45.5 24.7Z" fill="#f1f7c1" stroke="#9db350" stroke-width="0.4"/><path d="M52.1 24.4Q47.2 31.8 54.3 35.6L58.6 35.3L60.9 31.7Q60.9 23.6 52.1 24.4Z" fill="#cedf78" stroke="#8aa142" stroke-width="0.4"/><path d="M29.8 20.3Q21.2 20.1 22.5 27.4L25.3 30.4L29.5 30.4Q35.7 26.5 29.8 20.3Z" fill="#d9e78f" stroke="#90a746" stroke-width="0.4"/><path d="M40.6 19.8Q33.7 23.5 37.8 29.0L41.4 30.4L44.8 28.5Q48.1 22.5 40.6 19.8Z" fill="#fbfde5" stroke="#a7bc58" stroke-width="0.4"/><path d="M50.3 19.5Q46.1 25.7 52.2 29.5L55.8 29.5L57.8 26.5Q57.7 19.3 50.3 19.5Z" fill="#d1e17d" stroke="#8ba243" stroke-width="0.4"/><path d="M32.9 15.1Q25.2 16.3 26.4 23.8L28.9 26.6L32.6 26.0Q38.1 20.8 32.9 15.1Z" fill="#d9e78f" stroke="#90a746" stroke-width="0.4"/><path d="M40.5 14.8Q34.0 18.5 37.9 24.1L41.3 25.4L44.5 23.6Q47.5 17.4 40.5 14.8Z" fill="#fdfeea" stroke="#aabf5a" stroke-width="0.4"/><path d="M49.1 14.4Q44.6 21.6 51.5 25.2L55.6 24.9L57.7 21.4Q57.5 13.6 49.1 14.4Z" fill="#c3d56d" stroke="#879e3f" stroke-width="0.4"/><path d="M35.5 9.9Q27.9 11.3 28.9 18.9L31.4 21.8L35.0 21.0Q40.6 15.7 35.5 9.9Z" fill="#e0ec9d" stroke="#93aa49" stroke-width="0.4"/><path d="M43.8 9.6Q38.2 15.8 44.3 19.6L48.3 19.6L51.0 16.6Q52.1 9.4 43.8 9.6Z" fill="#d7e68b" stroke="#8fa645" stroke-width="0.4"/><path d="M17.0 42.0 L12.8 43.7 L10.6 45.5 L8.8 47.2 L7.3 49.0 L6.0 50.7 L5.0 52.5 L4.0 54.2 L3.3 56.0 L2.7 57.7 L2.2 59.5 L1.9 61.2 L1.6 63.0 L1.5 64.7 L1.6 66.4 L1.7 68.2 L2.0 69.9 L2.3 71.7 L2.8 73.4 L3.4 75.2 L4.0 76.9 L4.8 78.7 L5.6 80.4 L6.6 82.2 L7.6 83.9 L8.7 85.7 L9.9 87.4 L11.3 89.1 L12.8 90.9 L14.5 92.6 L17.0 94.4 L17.0 94.4 L19.5 92.6 L21.2 90.9 L22.7 89.1 L24.1 87.4 L25.3 85.7 L26.4 83.9 L27.4 82.2 L28.4 80.4 L29.2 78.7 L30.0 76.9 L30.6 75.2 L31.2 73.4 L31.7 71.7 L32.0 69.9 L32.3 68.2 L32.4 66.4 L32.5 64.7 L32.4 63.0 L32.1 61.2 L31.8 59.5 L31.3 57.7 L30.7 56.0 L30.0 54.2 L29.0 52.5 L28.0 50.7 L26.7 49.0 L25.2 47.2 L23.4 45.5 L21.2 43.7 L17.0 42.0Z" fill="#8aa63a"/><path d="M12.9 85.0Q5.4 86.0 5.7 93.8L7.9 96.8L11.5 96.3Q17.4 91.1 12.9 85.0Z" fill="#e3eea4" stroke="#95ac4a" stroke-width="0.4"/><path d="M21.1 85.0Q16.1 91.3 22.2 96.4L26.0 96.9L28.4 93.8Q29.0 85.9 21.1 85.0Z" fill="#bbcf67" stroke="#869d3e" stroke-width="0.4"/><path d="M10.7 79.8Q3.1 80.6 3.2 88.6L5.2 91.7L8.9 91.2Q14.9 86.0 10.7 79.8Z" fill="#e4efa6" stroke="#96ac4b" stroke-width="0.4"/><path d="M17.9 79.8Q11.7 83.8 15.4 90.2L18.6 91.8L21.7 89.8Q24.6 83.0 17.9 79.8Z" fill="#edf5b8" stroke="#9bb14f" stroke-width="0.4"/><path d="M24.7 79.8Q21.1 86.4 27.6 91.0L31.3 91.1L33.0 87.9Q32.3 79.9 24.7 79.8Z" fill="#7a9235" stroke="#7a9336" stroke-width="0.4"/><path d="M8.5 74.5Q1.1 74.8 1.1 82.3L3.1 85.3L6.7 85.1Q12.6 80.6 8.5 74.5Z" fill="#dfeb9b" stroke="#93aa49" stroke-width="0.4"/><path d="M17.3 74.5Q11.0 78.2 14.4 84.8L17.5 86.6L20.5 84.7Q23.7 78.0 17.3 74.5Z" fill="#f0f7bf" stroke="#9db350" stroke-width="0.4"/><path d="M26.0 74.5Q22.0 80.6 28.0 84.5L31.5 84.5L33.4 81.5Q33.3 74.4 26.0 74.5Z" fill="#acc15c" stroke="#839b3c" stroke-width="0.4"/><path d="M8.1 69.2Q0.2 69.7 0.5 77.6L2.7 80.8L6.6 80.4Q12.8 75.6 8.1 69.2Z" fill="#deea98" stroke="#92a948" stroke-width="0.4"/><path d="M18.1 69.2Q11.7 72.9 15.4 78.9L18.7 80.4L21.8 78.6Q24.9 72.2 18.1 69.2Z" fill="#f0f7be" stroke="#9cb250" stroke-width="0.4"/><path d="M28.2 69.2Q25.2 75.5 31.4 79.8L34.8 80.0L36.3 76.9Q35.2 69.4 28.2 69.2Z" fill="#738c31" stroke="#799235" stroke-width="0.4"/><path d="M6.2 63.9Q-1.1 64.1 -1.6 71.7L0.1 74.8L3.6 74.6Q9.8 70.2 6.2 63.9Z" fill="#d2e280" stroke="#8ca343" stroke-width="0.4"/><path d="M13.3 63.9Q6.1 66.0 8.5 72.6L11.4 74.8L14.9 73.7Q19.4 68.3 13.3 63.9Z" fill="#fafcde" stroke="#a6bb57" stroke-width="0.4"/><path d="M19.7 63.9Q14.1 68.1 18.0 73.9L21.2 75.2L23.9 73.2Q26.2 66.5 19.7 63.9Z" fill="#eaf3b1" stroke="#99af4d" stroke-width="0.4"/><path d="M27.3 63.9Q23.3 70.0 29.2 74.1L32.8 74.3L34.7 71.3Q34.6 64.1 27.3 63.9Z" fill="#9bb14f" stroke="#80983a" stroke-width="0.4"/><path d="M7.8 58.6Q0.4 58.9 0.9 66.0L3.0 68.9L6.7 68.7Q12.4 64.5 7.8 58.6Z" fill="#d9e790" stroke="#90a746" stroke-width="0.4"/><path d="M14.8 58.6Q7.8 61.8 10.4 69.1L13.4 71.4L16.8 69.8Q20.9 63.2 14.8 58.6Z" fill="#fdfeea" stroke="#a9be59" stroke-width="0.4"/><path d="M21.9 58.6Q16.1 63.9 21.1 69.8L24.8 70.9L27.6 68.3Q29.4 60.7 21.9 58.6Z" fill="#d9e78e" stroke="#8fa646" stroke-width="0.4"/><path d="M28.7 58.6Q24.6 65.3 31.0 68.8L34.8 68.4L36.8 65.2Q36.5 57.9 28.7 58.6Z" fill="#799235" stroke="#7a9336" stroke-width="0.4"/><path d="M7.8 53.4Q0.7 54.0 0.1 61.7L1.8 64.8L5.2 64.4Q11.3 59.6 7.8 53.4Z" fill="#e0ec9d" stroke="#94aa49" stroke-width="0.4"/><path d="M16.6 53.4Q10.5 56.6 13.5 63.0L16.3 64.8L19.2 63.1Q22.4 56.9 16.6 53.4Z" fill="#f9fcdb" stroke="#a5ba56" stroke-width="0.4"/><path d="M26.3 53.4Q22.8 59.5 28.8 64.2L32.2 64.6L33.9 61.5Q33.4 53.9 26.3 53.4Z" fill="#99af4d" stroke="#80983a" stroke-width="0.4"/><path d="M10.6 48.1Q3.8 48.6 4.3 55.3L6.3 58.0L9.6 57.7Q14.9 53.5 10.6 48.1Z" fill="#e4efa6" stroke="#96ac4b" stroke-width="0.4"/><path d="M18.1 48.1Q12.4 52.4 16.0 59.4L19.0 61.2L21.8 59.0Q24.3 51.6 18.1 48.1Z" fill="#f4f9ca" stroke="#a0b553" stroke-width="0.4"/><path d="M24.9 48.1Q20.9 54.5 27.1 58.6L30.8 58.5L32.8 55.4Q32.5 47.9 24.9 48.1Z" fill="#9eb451" stroke="#81993b" stroke-width="0.4"/><path d="M12.8 42.8Q6.1 43.3 6.3 50.1L8.1 52.8L11.4 52.5Q16.7 48.3 12.8 42.8Z" fill="#d8e68c" stroke="#8fa646" stroke-width="0.4"/><path d="M21.0 42.8Q17.0 48.6 22.5 53.4L25.9 53.9L27.8 51.1Q27.9 43.7 21.0 42.8Z" fill="#b9cd66" stroke="#859d3e" stroke-width="0.4"/></g><path d="M100.8 97.5 L100.8 97.7 L101.0 98.0 L101.2 98.2 L101.5 98.5 L101.9 98.8 L102.5 99.1 L103.2 99.4 L104.3 99.7 L106.1 100.1 L106.9 100.5 L107.5 100.9 L107.9 101.2 L108.3 101.6 L108.5 101.9 L108.6 102.2 L108.6 102.6 L108.6 102.9 L108.4 103.2 L108.2 103.4 L107.9 103.7 L107.4 103.9 L106.9 104.1 L106.2 104.3 L105.2 104.4 L103.2 104.3 L102.2 104.3 L101.5 104.4 L101.0 104.5 L100.5 104.7 L100.2 104.9 L99.9 105.0 L99.7 105.3 L99.6 105.5 L99.6 105.7 L99.7 106.0 L99.9 106.3 L100.1 106.7 L100.5 107.1 L101.0 107.5 L101.6 108.0 L103.2 108.9 L104.3 109.6 L104.8 110.2 L105.2 110.6 L105.5 111.1 L105.7 111.5 L105.8 111.9 L105.8 112.2 L105.7 112.6 L105.6 112.8 L105.3 113.1 L105.0 113.2 L104.6 113.4 L104.0 113.5 L103.4 113.5 L102.7 113.4 L101.6 113.2 L99.8 112.5 L98.9 112.3 L98.2 112.2 L97.7 112.2 L97.3 112.3 L96.9 112.3 L96.6 112.4 L96.4 112.6 L96.3 112.8 L96.2 113.1 L96.2 113.4 L96.3 113.7 L96.5 114.2 L96.8 114.7 L97.1 115.2 L97.7 116.0 L99.1 117.4 L99.7 118.2 L100.0 118.9 L100.3 119.4 L100.4 119.9 L100.4 120.4 L100.4 120.7 L100.3 121.1 L100.1 121.3 L99.8 121.5 L99.5 121.6 L99.1 121.7 L98.7 121.7 L98.1 121.6 L97.5 121.4 L96.7 121.1 L95.5 120.3 L94.2 119.4 L93.5 119.0 L92.9 118.8 L92.4 118.6 L92.0 118.6 L91.6 118.5 L91.4 118.6 L91.1 118.7 L91.0 118.9 L90.9 119.1 L90.8 119.5 L90.8 119.9 L90.9 120.3 L91.0 120.9 L91.2 121.6 L91.6 122.6 L92.5 124.3 L92.8 125.2 L92.9 125.9 L93.0 126.5 L92.9 126.9 L92.8 127.3 L92.7 127.7 L92.5 127.9 L92.2 128.1 L91.9 128.2 L91.5 128.2 L91.1 128.1 L90.7 128.0 L90.2 127.7 L89.6 127.3 L88.9 126.8 L87.7 125.2 L87.0 124.4 L86.4 123.9 L86.0 123.5 L85.6 123.3 L85.2 123.1 L84.9 123.0 L84.6 123.0 L84.4 123.1 L84.2 123.2 L84.0 123.5 L83.8 123.8 L83.7 124.2 L83.7 124.7 L83.6 125.3 L83.7 126.1 L83.9 127.3 L84.2 129.1 L84.2 129.9 L84.1 130.6 L84.0 131.1 L83.8 131.6 L83.5 131.9 L83.3 132.1 L83.0 132.3 L82.7 132.4 L82.4 132.3 L82.0 132.2 L81.6 132.0 L81.2 131.7 L80.8 131.3 L80.4 130.7 L79.9 129.9 L79.2 128.0 L78.7 127.1 L78.3 126.6 L78.0 126.1 L77.7 125.8 L77.4 125.5 L77.1 125.4 L76.9 125.3 L76.6 125.3 L76.4 125.4 L76.2 125.6 L75.9 125.9 L75.7 126.3 L75.5 126.8 L75.3 127.4 L75.1 128.3 L75.0 130.2 L74.8 131.3 L74.5 132.0 L74.2 132.6 L73.9 133.0 L73.6 133.4 L73.3 133.6 L73.0 133.8 L72.7 133.8 L72.4 133.8 L72.1 133.6 L71.8 133.4 L71.5 133.0 L71.2 132.6 L70.9 132.0 L70.6 131.3 L70.4 130.2 L70.3 128.3 L70.1 127.4 L69.9 126.8 L69.7 126.3 L69.5 125.9 L69.2 125.6 L69.0 125.4 L68.8 125.3 L68.5 125.3 L68.3 125.4 L68.0 125.5 L67.7 125.8 L67.4 126.1 L67.1 126.6 L66.7 127.1 L66.2 128.0 L65.5 129.9 L65.0 130.7 L64.6 131.3 L64.2 131.7 L63.8 132.0 L63.4 132.2 L63.0 132.3 L62.7 132.4 L62.4 132.3 L62.1 132.1 L61.9 131.9 L61.6 131.6 L61.4 131.1 L61.3 130.6 L61.2 129.9 L61.2 129.1 L61.5 127.3 L61.7 126.1 L61.8 125.3 L61.7 124.7 L61.7 124.2 L61.6 123.8 L61.4 123.5 L61.2 123.2 L61.0 123.1 L60.8 123.0 L60.5 123.0 L60.2 123.1 L59.8 123.3 L59.4 123.5 L59.0 123.9 L58.4 124.4 L57.7 125.2 L56.5 126.8 L55.8 127.3 L55.2 127.7 L54.7 128.0 L54.3 128.1 L53.9 128.2 L53.5 128.2 L53.2 128.1 L52.9 127.9 L52.7 127.7 L52.6 127.3 L52.5 126.9 L52.4 126.5 L52.5 125.9 L52.6 125.2 L52.9 124.3 L53.8 122.6 L54.2 121.6 L54.4 120.9 L54.5 120.3 L54.6 119.9 L54.6 119.5 L54.5 119.1 L54.4 118.9 L54.3 118.7 L54.0 118.6 L53.8 118.5 L53.4 118.6 L53.0 118.6 L52.5 118.8 L51.9 119.0 L51.2 119.4 L49.9 120.3 L48.7 121.1 L47.9 121.4 L47.3 121.6 L46.7 121.7 L46.3 121.7 L45.9 121.6 L45.6 121.5 L45.3 121.3 L45.1 121.1 L45.0 120.7 L45.0 120.4 L45.0 119.9 L45.1 119.4 L45.4 118.9 L45.7 118.2 L46.3 117.4 L47.7 116.0 L48.3 115.2 L48.6 114.7 L48.9 114.2 L49.1 113.7 L49.2 113.4 L49.2 113.1 L49.1 112.8 L49.0 112.6 L48.8 112.4 L48.5 112.3 L48.1 112.3 L47.7 112.2 L47.2 112.2 L46.5 112.3 L45.6 112.5 L43.8 113.2 L42.7 113.4 L42.0 113.5 L41.4 113.5 L40.8 113.4 L40.4 113.2 L40.1 113.1 L39.8 112.8 L39.7 112.6 L39.6 112.2 L39.6 111.9 L39.7 111.5 L39.9 111.1 L40.2 110.6 L40.6 110.2 L41.1 109.6 L42.2 108.9 L43.8 108.0 L44.4 107.5 L44.9 107.1 L45.3 106.7 L45.5 106.3 L45.7 106.0 L45.8 105.7 L45.8 105.5 L45.7 105.3 L45.5 105.0 L45.2 104.9 L44.9 104.7 L44.4 104.5 L43.9 104.4 L43.2 104.3 L42.2 104.3 L40.2 104.4 L39.2 104.3 L38.5 104.1 L38.0 103.9 L37.5 103.7 L37.2 103.4 L37.0 103.2 L36.8 102.9 L36.8 102.6 L36.8 102.2 L36.9 101.9 L37.1 101.6 L37.5 101.2 L37.9 100.9 L38.5 100.5 L39.3 100.1 L41.1 99.7 L42.2 99.4 L42.9 99.1 L43.5 98.8 L43.9 98.5 L44.2 98.2 L44.4 98.0 L44.6 97.7 L44.6 97.5 L44.6 97.3 L44.4 97.0 L44.2 96.8 L43.9 96.5 L43.5 96.2 L42.9 95.9 L42.2 95.6 L41.1 95.3 L39.3 94.9 L38.5 94.5 L37.9 94.1 L37.5 93.8 L37.1 93.4 L36.9 93.1 L36.8 92.8 L36.8 92.4 L36.8 92.1 L37.0 91.8 L37.2 91.6 L37.5 91.3 L38.0 91.1 L38.5 90.9 L39.2 90.7 L40.2 90.6 L42.2 90.7 L43.2 90.7 L43.9 90.6 L44.4 90.5 L44.9 90.3 L45.2 90.1 L45.5 90.0 L45.7 89.7 L45.8 89.5 L45.8 89.3 L45.7 89.0 L45.5 88.7 L45.3 88.3 L44.9 87.9 L44.4 87.5 L43.8 87.0 L42.2 86.1 L41.1 85.4 L40.6 84.8 L40.2 84.4 L39.9 83.9 L39.7 83.5 L39.6 83.1 L39.6 82.8 L39.7 82.4 L39.8 82.2 L40.1 81.9 L40.4 81.8 L40.8 81.6 L41.4 81.5 L42.0 81.5 L42.7 81.6 L43.8 81.8 L45.6 82.5 L46.5 82.7 L47.2 82.8 L47.7 82.8 L48.1 82.7 L48.5 82.7 L48.8 82.6 L49.0 82.4 L49.1 82.2 L49.2 81.9 L49.2 81.6 L49.1 81.3 L48.9 80.8 L48.6 80.3 L48.3 79.8 L47.7 79.0 L46.3 77.6 L45.7 76.8 L45.4 76.1 L45.1 75.6 L45.0 75.1 L45.0 74.6 L45.0 74.3 L45.1 73.9 L45.3 73.7 L45.6 73.5 L45.9 73.4 L46.3 73.3 L46.7 73.3 L47.3 73.4 L47.9 73.6 L48.7 73.9 L49.9 74.7 L51.2 75.6 L51.9 76.0 L52.5 76.2 L53.0 76.4 L53.4 76.4 L53.8 76.5 L54.0 76.4 L54.3 76.3 L54.4 76.1 L54.5 75.9 L54.6 75.5 L54.6 75.1 L54.5 74.7 L54.4 74.1 L54.2 73.4 L53.8 72.4 L52.9 70.7 L52.6 69.8 L52.5 69.1 L52.4 68.5 L52.5 68.1 L52.6 67.7 L52.7 67.3 L52.9 67.1 L53.2 66.9 L53.5 66.8 L53.9 66.8 L54.3 66.9 L54.7 67.0 L55.2 67.3 L55.8 67.7 L56.5 68.2 L57.7 69.8 L58.4 70.6 L59.0 71.1 L59.4 71.5 L59.8 71.7 L60.2 71.9 L60.5 72.0 L60.8 72.0 L61.0 71.9 L61.2 71.8 L61.4 71.5 L61.6 71.2 L61.7 70.8 L61.7 70.3 L61.8 69.7 L61.7 68.9 L61.5 67.7 L61.2 65.9 L61.2 65.1 L61.3 64.4 L61.4 63.9 L61.6 63.4 L61.9 63.1 L62.1 62.9 L62.4 62.7 L62.7 62.6 L63.0 62.7 L63.4 62.8 L63.8 63.0 L64.2 63.3 L64.6 63.7 L65.0 64.3 L65.5 65.1 L66.2 67.0 L66.7 67.9 L67.1 68.4 L67.4 68.9 L67.7 69.2 L68.0 69.5 L68.3 69.6 L68.5 69.7 L68.8 69.7 L69.0 69.6 L69.2 69.4 L69.5 69.1 L69.7 68.7 L69.9 68.2 L70.1 67.6 L70.3 66.7 L70.4 64.8 L70.6 63.7 L70.9 63.0 L71.2 62.4 L71.5 62.0 L71.8 61.6 L72.1 61.4 L72.4 61.2 L72.7 61.2 L73.0 61.2 L73.3 61.4 L73.6 61.6 L73.9 62.0 L74.2 62.4 L74.5 63.0 L74.8 63.7 L75.0 64.8 L75.1 66.7 L75.3 67.6 L75.5 68.2 L75.7 68.7 L75.9 69.1 L76.2 69.4 L76.4 69.6 L76.6 69.7 L76.9 69.7 L77.1 69.6 L77.4 69.5 L77.7 69.2 L78.0 68.9 L78.3 68.4 L78.7 67.9 L79.2 67.0 L79.9 65.1 L80.4 64.3 L80.8 63.7 L81.2 63.3 L81.6 63.0 L82.0 62.8 L82.4 62.7 L82.7 62.6 L83.0 62.7 L83.3 62.9 L83.5 63.1 L83.8 63.4 L84.0 63.9 L84.1 64.4 L84.2 65.1 L84.2 65.9 L83.9 67.7 L83.7 68.9 L83.6 69.7 L83.7 70.3 L83.7 70.8 L83.8 71.2 L84.0 71.5 L84.2 71.8 L84.4 71.9 L84.6 72.0 L84.9 72.0 L85.2 71.9 L85.6 71.7 L86.0 71.5 L86.4 71.1 L87.0 70.6 L87.7 69.8 L88.9 68.2 L89.6 67.7 L90.2 67.3 L90.7 67.0 L91.1 66.9 L91.5 66.8 L91.9 66.8 L92.2 66.9 L92.5 67.1 L92.7 67.3 L92.8 67.7 L92.9 68.1 L93.0 68.5 L92.9 69.1 L92.8 69.8 L92.5 70.7 L91.6 72.4 L91.2 73.4 L91.0 74.1 L90.9 74.7 L90.8 75.1 L90.8 75.5 L90.9 75.9 L91.0 76.1 L91.1 76.3 L91.4 76.4 L91.6 76.5 L92.0 76.4 L92.4 76.4 L92.9 76.2 L93.5 76.0 L94.2 75.6 L95.5 74.7 L96.7 73.9 L97.5 73.6 L98.1 73.4 L98.7 73.3 L99.1 73.3 L99.5 73.4 L99.8 73.5 L100.1 73.7 L100.3 73.9 L100.4 74.3 L100.4 74.6 L100.4 75.1 L100.3 75.6 L100.0 76.1 L99.7 76.8 L99.1 77.6 L97.7 79.0 L97.1 79.8 L96.8 80.3 L96.5 80.8 L96.3 81.3 L96.2 81.6 L96.2 81.9 L96.3 82.2 L96.4 82.4 L96.6 82.6 L96.9 82.7 L97.3 82.7 L97.7 82.8 L98.2 82.8 L98.9 82.7 L99.8 82.5 L101.6 81.8 L102.7 81.6 L103.4 81.5 L104.0 81.5 L104.6 81.6 L105.0 81.8 L105.3 81.9 L105.6 82.2 L105.7 82.4 L105.8 82.8 L105.8 83.1 L105.7 83.5 L105.5 83.9 L105.2 84.4 L104.8 84.8 L104.3 85.4 L103.2 86.1 L101.6 87.0 L101.0 87.5 L100.5 87.9 L100.1 88.3 L99.9 88.7 L99.7 89.0 L99.6 89.3 L99.6 89.5 L99.7 89.7 L99.9 90.0 L100.2 90.1 L100.5 90.3 L101.0 90.5 L101.5 90.6 L102.2 90.7 L103.2 90.7 L105.2 90.6 L106.2 90.7 L106.9 90.9 L107.4 91.1 L107.9 91.3 L108.2 91.6 L108.4 91.8 L108.6 92.1 L108.6 92.4 L108.6 92.8 L108.5 93.1 L108.3 93.4 L107.9 93.8 L107.5 94.1 L106.9 94.5 L106.1 94.9 L104.3 95.3 L103.2 95.6 L102.5 95.9 L101.9 96.2 L101.5 96.5 L101.2 96.8 L101.0 97.0 L100.8 97.3Z" fill="#000"/><path d="M89.6 127.3 L88.9 126.8 L87.7 125.2 L87.0 124.4 L86.4 123.9 L86.0 123.5 L85.6 123.3 L85.2 123.1 L84.9 123.0 L84.6 123.0 L84.4 123.1 L84.2 123.2 L84.0 123.5 L83.8 123.8 L83.7 124.2 L83.7 124.7 L83.6 125.3 L83.7 126.1 L83.9 127.3 L84.2 129.1 L84.2 129.9 L84.1 130.6 L84.0 131.1 L83.8 131.6 L83.5 131.9 L83.3 132.1 L83.0 132.3 L82.7 132.4 L82.4 132.3 L82.0 132.2 L81.6 132.0 L81.2 131.7 L80.8 131.3 L80.4 130.7 L79.9 129.9 L79.2 128.0 L78.7 127.1 L78.3 126.6 L78.0 126.1 L77.7 125.8 L77.4 125.5 L77.1 125.4 L76.9 125.3 L76.6 125.3 L76.4 125.4 L76.2 125.6 L75.9 125.9 L75.7 126.3 L75.5 126.8 L75.3 127.4 L75.1 128.3 L75.0 130.2 L74.8 131.3 L74.5 132.0 L74.2 132.6 L73.9 133.0 L73.6 133.4 L73.3 133.6 L73.0 133.8 L72.7 133.8 L72.4 133.8 L72.1 133.6 L71.8 133.4 L71.5 133.0 L71.2 132.6 L70.9 132.0 L70.6 131.3 L70.4 130.2 L70.3 128.3 L70.1 127.4 L69.9 126.8 L69.7 126.3 L69.5 125.9 L69.2 125.6 L69.0 125.4 L68.8 125.3 L68.5 125.3 L68.3 125.4 L68.0 125.5 L67.7 125.8 L67.4 126.1 L67.1 126.6 L66.7 127.1 L66.2 128.0 L65.5 129.9 L65.0 130.7 L64.6 131.3 L64.2 131.7 L63.8 132.0 L63.4 132.2 L63.0 132.3 L62.7 132.4 L62.4 132.3 L62.1 132.1 L61.9 131.9 L61.6 131.6 L61.4 131.1 L61.3 130.6 L61.2 129.9 L61.2 129.1 L61.5 127.3 L61.7 126.1 L61.8 125.3 L61.7 124.7 L61.7 124.2 L61.6 123.8 L61.4 123.5 L61.2 123.2 L61.0 123.1 L60.8 123.0 L60.5 123.0 L60.2 123.1 L59.8 123.3 L59.4 123.5 L59.0 123.9 L58.4 124.4 L57.7 125.2 L56.5 126.8 L55.8 127.3 L55.2 127.7 L54.7 128.0 L54.3 128.1 L53.9 128.2 L53.5 128.2 L53.2 128.1 L52.9 127.9 L52.7 127.7 L52.6 127.3 L52.5 126.9 L52.4 126.5 L52.5 125.9 L52.6 125.2 L52.9 124.3 L53.8 122.6 L54.2 121.6 L54.4 120.9 L54.5 120.3 L54.6 119.9 L54.6 119.5 L54.5 119.1 L54.4 118.9 L54.3 118.7 L54.0 118.6 L53.8 118.5 L53.4 118.6 L53.0 118.6 L52.5 118.8 L51.9 119.0 L51.2 119.4 L49.9 120.3 L48.7 121.1 L47.9 121.4 L47.3 121.6 L46.7 121.7 L46.3 121.7 L45.9 121.6 L45.6 121.5 L45.3 121.3 L45.1 121.1 L45.0 120.7 L45.0 120.4 L45.0 119.9 L45.1 119.4 L45.4 118.9 L45.7 118.2 L46.3 117.4 L47.7 116.0 L48.3 115.2 L48.6 114.7 L48.9 114.2 L49.1 113.7 L49.2 113.4 L49.2 113.1 L49.1 112.8 L49.0 112.6 L48.8 112.4 L48.5 112.3 L48.1 112.3 L47.7 112.2 L47.2 112.2 L46.5 112.3 L45.6 112.5 L43.8 113.2 L42.7 113.4 L42.0 113.5 L41.4 113.5 L40.8 113.4 L40.4 113.2 L40.1 113.1 L39.8 112.8 L39.7 112.6 L39.6 112.2 L39.6 111.9 L39.7 111.5 L39.9 111.1 L40.2 110.6 L40.6 110.2 L41.1 109.6 L42.2 108.9 L43.8 108.0 L44.4 107.5 L44.9 107.1 L45.3 106.7 L45.5 106.3 L45.7 106.0 L45.8 105.7 L45.8 105.5 L45.7 105.3 L45.5 105.0 L45.2 104.9 L44.9 104.7 L44.4 104.5 L43.9 104.4 L43.2 104.3 L42.2 104.3 L40.2 104.4 L39.2 104.3 L38.5 104.1 L38.0 103.9 L37.5 103.7 L37.2 103.4 L37.0 103.2 L36.8 102.9 L36.8 102.6 L36.8 102.2 L36.9 101.9 L37.1 101.6 L37.5 101.2 L37.9 100.9 L38.5 100.5 L39.3 100.1 L41.1 99.7 L42.2 99.4 L42.9 99.1 L43.5 98.8 L43.9 98.5 L44.2 98.2 L44.4 98.0 L44.6 97.7 L44.6 97.5 L44.6 97.3 L44.4 97.0 L44.2 96.8 L43.9 96.5 L43.5 96.2 L42.9 95.9 L42.2 95.6 L41.1 95.3 L39.3 94.9 L38.5 94.5 L37.9 94.1 L37.5 93.8 L37.1 93.4 L36.9 93.1 L36.8 92.8 L36.8 92.4 L36.8 92.1 L37.0 91.8 L37.2 91.6 L37.5 91.3 L38.0 91.1 L38.5 90.9 L39.2 90.7 L40.2 90.6 L42.2 90.7 L43.2 90.7 L43.9 90.6 L44.4 90.5 L44.9 90.3 L45.2 90.1 L45.5 90.0 L45.7 89.7 L45.8 89.5 L45.8 89.3 L45.7 89.0 L45.5 88.7 L45.3 88.3 L44.9 87.9 L44.4 87.5 L43.8 87.0 L42.2 86.1 L41.1 85.4 L40.6 84.8 L40.2 84.4 L39.9 83.9 L39.7 83.5 L39.6 83.1 L39.6 82.8 L39.7 82.4 L39.8 82.2 L40.1 81.9 L40.4 81.8 L40.8 81.6 L41.4 81.5 L42.0 81.5 L42.7 81.6 L43.8 81.8 L45.6 82.5 L46.5 82.7 L47.2 82.8 L47.7 82.8 L48.1 82.7 L48.5 82.7 L48.8 82.6 L49.0 82.4 L49.1 82.2" fill="none" stroke="#a0a098" stroke-width="0.55"/><g clip-path="url(#hc)"><g filter="url(#hb)"><path d="M61.0 73.0 L58.2 75.9 L56.9 77.9 L56.0 79.7 L55.4 81.4 L54.9 83.0 L54.6 84.5 L54.4 85.9 L54.4 87.2 L54.4 88.5 L54.6 89.8 L54.9 90.9 L55.3 92.1 L55.7 93.1 L56.3 94.1 L57.0 95.1 L57.8 96.0 L58.6 96.9 L59.5 97.7 L60.6 98.4 L61.6 99.2 L62.8 99.9 L64.1 100.5 L65.4 101.1 L66.8 101.7 L68.2 102.2 L69.8 102.7 L71.4 103.1 L73.2 103.5 L75.1 103.7 L77.7 103.6 L77.7 103.6 L79.2 101.5 L80.1 99.7 L80.7 98.0 L81.2 96.4 L81.7 94.9 L82.0 93.4 L82.3 91.9 L82.5 90.4 L82.6 89.0 L82.7 87.7 L82.7 86.4 L82.6 85.1 L82.4 83.9 L82.1 82.7 L81.7 81.6 L81.3 80.5 L80.8 79.4 L80.1 78.5 L79.4 77.5 L78.6 76.7 L77.6 75.9 L76.6 75.1 L75.4 74.4 L74.1 73.8 L72.7 73.3 L71.1 72.8 L69.3 72.4 L67.3 72.2 L64.9 72.2 L61.0 73.0Z" fill="#8aa63a"/><path d="M70.5 98.8Q64.5 103.5 68.9 110.0L72.3 111.5L75.1 109.1Q77.5 101.7 70.5 98.8Z" fill="#ddea97" stroke="#92a948" stroke-width="0.4"/><path d="M79.4 94.0Q78.8 101.2 85.7 101.4L88.8 99.6L89.0 96.0Q85.5 90.1 79.4 94.0Z" fill="#8ea545" stroke="#7e9638" stroke-width="0.4"/><path d="M64.8 95.9Q59.0 99.6 62.3 105.8L65.3 107.5L68.0 105.6Q70.9 99.1 64.8 95.9Z" fill="#d8e78d" stroke="#8fa646" stroke-width="0.4"/><path d="M71.5 92.2Q68.6 98.0 74.2 102.6L77.4 103.0L78.8 100.1Q78.0 92.9 71.5 92.2Z" fill="#f8fcdb" stroke="#a5ba56" stroke-width="0.4"/><path d="M78.4 88.5Q77.9 95.2 84.7 96.2L87.7 94.8L87.9 91.4Q84.5 85.5 78.4 88.5Z" fill="#c7d970" stroke="#889f40" stroke-width="0.4"/><path d="M61.9 91.5Q56.6 95.3 60.0 101.2L62.8 102.7L65.3 100.8Q67.7 94.4 61.9 91.5Z" fill="#d8e78e" stroke="#8fa646" stroke-width="0.4"/><path d="M67.0 88.7Q62.6 94.6 68.2 100.0L71.8 100.7L73.9 97.8Q74.3 89.9 67.0 88.7Z" fill="#f4f9cd" stroke="#a1b653" stroke-width="0.4"/><path d="M72.7 85.6Q70.7 92.2 77.5 95.3L80.8 94.8L81.7 91.6Q79.5 84.5 72.7 85.6Z" fill="#eaf3b2" stroke="#99af4d" stroke-width="0.4"/><path d="M78.0 82.7Q78.1 90.1 86.0 91.0L89.3 89.4L89.1 85.8Q84.6 79.3 78.0 82.7Z" fill="#a1b754" stroke="#81993b" stroke-width="0.4"/><path d="M57.9 87.6Q51.6 91.4 54.8 98.3L57.8 100.2L60.9 98.3Q64.2 91.4 57.9 87.6Z" fill="#d5e588" stroke="#8ea545" stroke-width="0.4"/><path d="M64.2 84.2Q59.6 90.1 65.2 95.6L68.8 96.3L71.0 93.4Q71.6 85.5 64.2 84.2Z" fill="#f7fbd5" stroke="#a3b855" stroke-width="0.4"/><path d="M69.5 81.3Q67.3 87.9 74.0 91.5L77.4 91.2L78.4 87.9Q76.4 80.6 69.5 81.3Z" fill="#eef5b9" stroke="#9bb14f" stroke-width="0.4"/><path d="M75.0 78.3Q74.7 85.2 81.7 86.0L84.8 84.6L84.8 81.2Q81.1 75.2 75.0 78.3Z" fill="#9ab04e" stroke="#80983a" stroke-width="0.4"/><path d="M57.5 81.8Q51.6 85.9 55.1 92.5L58.2 94.2L61.0 92.1Q63.8 85.2 57.5 81.8Z" fill="#d4e485" stroke="#8da444" stroke-width="0.4"/><path d="M64.4 78.1Q61.3 84.2 67.3 88.6L70.6 88.8L72.1 85.8Q71.2 78.4 64.4 78.1Z" fill="#fbfde2" stroke="#a7bc58" stroke-width="0.4"/><path d="M71.5 74.2Q71.6 81.0 78.8 81.9L81.8 80.4L81.7 77.1Q77.6 71.1 71.5 74.2Z" fill="#a6bb57" stroke="#829a3c" stroke-width="0.4"/><path d="M58.4 75.3Q52.7 79.9 56.8 86.3L60.0 87.7L62.8 85.5Q65.1 78.2 58.4 75.3Z" fill="#e2eda1" stroke="#95ab4a" stroke-width="0.4"/><path d="M65.1 71.7Q64.5 78.9 71.9 80.2L75.1 78.8L75.3 75.2Q71.7 68.7 65.1 71.7Z" fill="#a9be5a" stroke="#829a3c" stroke-width="0.4"/></g></g><circle cx="72.9" cy="97.1" r="17.4" fill="none" stroke="#a8a468" stroke-width="0.6"/></g><text x="60" y="17.6" font-family="Liberation Sans, sans-serif" font-weight="bold" font-size="10.8" fill="#ddd67a" textLength="26.7" lengthAdjust="spacingAndGlyphs">Hmel</text><text x="3" y="133.7" font-family="Liberation Sans, sans-serif" font-weight="bold" font-size="9.4" fill="#ddd67a" textLength="44.2" lengthAdjust="spacingAndGlyphs">microluch</text></svg>
<span class="t" style="left:47.50px;top:315.20px;font-size:13px;line-height:13px;color:#000;transform:scaleX(0.9300);">0°</span>
<span class="t" style="left:117.70px;top:315.20px;font-size:13px;line-height:13px;color:#000;transform:scaleX(0.9300);">5°</span>
<span class="t" style="left:187.90px;top:315.20px;font-size:13px;line-height:13px;color:#000;transform:scaleX(0.9300);">7°</span>
<span class="t" style="left:258.10px;top:315.20px;font-size:13px;line-height:13px;color:#000;transform:scaleX(0.9300);">7°</span>
<span class="t" style="left:328.30px;top:315.20px;font-size:13px;line-height:13px;color:#000;transform:scaleX(0.9300);">7°</span>
<span class="t" style="left:398.50px;top:315.20px;font-size:13px;line-height:13px;color:#000;transform:scaleX(0.9300);">5°</span>
<span class="t" style="left:468.70px;top:315.20px;font-size:13px;line-height:13px;color:#000;transform:scaleX(0.9300);">3°</span>
<span class="t" style="left:538.90px;top:315.20px;font-size:13px;line-height:13px;color:#000;transform:scaleX(0.9300);">0°</span>
<span class="t" style="left:609.10px;top:315.20px;font-size:13px;line-height:13px;color:#000;transform:scaleX(0.9300);">0°</span>
<span class="t" style="left:679.30px;top:315.20px;font-size:13px;line-height:13px;color:#000;transform:scaleX(0.9300);">0°</span>
<div class="b" style="left:28px;top:325px;width:49px;height:79px;background:#F0F0F0;border-top:1px solid #B4B4B4;border-left:1px solid #B4B4B4;border-right:1px solid #fff;border-bottom:1px solid #fff;"></div>
<div class="b" style="left:51px;top:333px;width:1px;height:60px;background:#A9A9A9;"></div>
<div class="b" style="left:52px;top:333px;width:1px;height:60px;background:#fff;"></div>
<div class="b" style="left:38px;top:338px;width:4px;height:53.5px;background:repeating-linear-gradient(#000 0,#000 1px,transparent 1px,transparent 2.625px);"></div>
<div class="b" style="left:65px;top:338px;width:4px;height:53.5px;background:repeating-linear-gradient(#000 0,#000 1px,transparent 1px,transparent 2.625px);"></div>
<div class="b" style="left:44px;top:387px;width:19px;height:8px;background:#3399FF;border-right:1px solid #A0A0A0;border-bottom:1px solid #A0A0A0;"></div>
<div class="b" style="left:121px;top:333px;width:1px;height:60px;background:#A9A9A9;"></div>
<div class="b" style="left:122px;top:333px;width:1px;height:60px;background:#fff;"></div>
<div class="b" style="left:108px;top:338px;width:4px;height:53.5px;background:repeating-linear-gradient(#000 0,#000 1px,transparent 1px,transparent 2.625px);"></div>
<div class="b" style="left:135px;top:338px;width:4px;height:53.5px;background:repeating-linear-gradient(#000 0,#000 1px,transparent 1px,transparent 2.625px);"></div>
<div class="b" style="left:114px;top:374px;width:19px;height:8px;background:#254A9C;border-right:1px solid #A0A0A0;border-bottom:1px solid #A0A0A0;"></div>
<div class="b" style="left:191px;top:333px;width:1px;height:60px;background:#A9A9A9;"></div>
<div class="b" style="left:192px;top:333px;width:1px;height:60px;background:#fff;"></div>
<div class="b" style="left:179px;top:338px;width:4px;height:53.5px;background:repeating-linear-gradient(#000 0,#000 1px,transparent 1px,transparent 2.625px);"></div>
<div class="b" style="left:205px;top:338px;width:4px;height:53.5px;background:repeating-linear-gradient(#000 0,#000 1px,transparent 1px,transparent 2.625px);"></div>
<div class="b" style="left:184px;top:369px;width:19px;height:8px;background:#254A9C;border-right:1px solid #A0A0A0;border-bottom:1px solid #A0A0A0;"></div>
<div class="b" style="left:262px;top:333px;width:1px;height:60px;background:#A9A9A9;"></div>
<div class="b" style="left:263px;top:333px;width:1px;height:60px;background:#fff;"></div>
<div class="b" style="left:249px;top:338px;width:4px;height:53.5px;background:repeating-linear-gradient(#000 0,#000 1px,transparent 1px,transparent 2.625px);"></div>
<div class="b" style="left:276px;top:338px;width:4px;height:53.5px;background:repeating-linear-gradient(#000 0,#000 1px,transparent 1px,transparent 2.625px);"></div>
<div class="b" style="left:254px;top:369px;width:19px;height:8px;background:#254A9C;border-right:1px solid #A0A0A0;border-bottom:1px solid #A0A0A0;"></div>
<div class="b" style="left:332px;top:333px;width:1px;height:60px;background:#A9A9A9;"></div>
<div class="b" style="left:333px;top:333px;width:1px;height:60px;background:#fff;"></div>
<div class="b" style="left:319px;top:338px;width:4px;height:53.5px;background:repeating-linear-gradient(#000 0,#000 1px,transparent 1px,transparent 2.625px);"></div>
<div class="b" style="left:346px;top:338px;width:4px;height:53.5px;background:repeating-linear-gradient(#000 0,#000 1px,transparent 1px,transparent 2.625px);"></div>
<div class="b" style="left:325px;top:369px;width:19px;height:8px;background:#254A9C;border-right:1px solid #A0A0A0;border-bottom:1px solid #A0A0A0;"></div>
<div class="b" style="left:402px;top:333px;width:1px;height:60px;background:#A9A9A9;"></div>
<div class="b" style="left:403px;top:333px;width:1px;height:60px;background:#fff;"></div>
<div class="b" style="left:389px;top:338px;width:4px;height:53.5px;background:repeating-linear-gradient(#000 0,#000 1px,transparent 1px,transparent 2.625px);"></div>
<div class="b" style="left:416px;top:338px;width:4px;height:53.5px;background:repeating-linear-gradient(#000 0,#000 1px,transparent 1px,transparent 2.625px);"></div>
<div class="b" style="left:395px;top:374px;width:19px;height:8px;background:#254A9C;border-right:1px solid #A0A0A0;border-bottom:1px solid #A0A0A0;"></div>
<div class="b" style="left:472px;top:333px;width:1px;height:60px;background:#A9A9A9;"></div>
<div class="b" style="left:473px;top:333px;width:1px;height:60px;background:#fff;"></div>
<div class="b" style="left:459px;top:338px;width:4px;height:53.5px;background:repeating-linear-gradient(#000 0,#000 1px,transparent 1px,transparent 2.625px);"></div>
<div class="b" style="left:486px;top:338px;width:4px;height:53.5px;background:repeating-linear-gradient(#000 0,#000 1px,transparent 1px,transparent 2.625px);"></div>
<div class="b" style="left:465px;top:379px;width:19px;height:8px;background:#254A9C;border-right:1px solid #A0A0A0;border-bottom:1px solid #A0A0A0;"></div>
<div class="b" style="left:542px;top:333px;width:1px;height:60px;background:#A9A9A9;"></div>
<div class="b" style="left:543px;top:333px;width:1px;height:60px;background:#fff;"></div>
<div class="b" style="left:530px;top:338px;width:4px;height:53.5px;background:repeating-linear-gradient(#000 0,#000 1px,transparent 1px,transparent 2.625px);"></div>
<div class="b" style="left:556px;top:338px;width:4px;height:53.5px;background:repeating-linear-gradient(#000 0,#000 1px,transparent 1px,transparent 2.625px);"></div>
<div class="b" style="left:535px;top:387px;width:19px;height:8px;background:#254A9C;border-right:1px solid #A0A0A0;border-bottom:1px solid #A0A0A0;"></div>
<div class="b" style="left:613px;top:333px;width:1px;height:60px;background:#A9A9A9;"></div>
<div class="b" style="left:614px;top:333px;width:1px;height:60px;background:#fff;"></div>
<div class="b" style="left:600px;top:338px;width:4px;height:53.5px;background:repeating-linear-gradient(#000 0,#000 1px,transparent 1px,transparent 2.625px);"></div>
<div class="b" style="left:627px;top:338px;width:4px;height:53.5px;background:repeating-linear-gradient(#000 0,#000 1px,transparent 1px,transparent 2.625px);"></div>
<div class="b" style="left:605px;top:387px;width:19px;height:8px;background:#254A9C;border-right:1px solid #A0A0A0;border-bottom:1px solid #A0A0A0;"></div>
<div class="b" style="left:683px;top:333px;width:1px;height:60px;background:#A9A9A9;"></div>
<div class="b" style="left:684px;top:333px;width:1px;height:60px;background:#fff;"></div>
<div class="b" style="left:670px;top:338px;width:4px;height:53.5px;background:repeating-linear-gradient(#000 0,#000 1px,transparent 1px,transparent 2.625px);"></div>
<div class="b" style="left:697px;top:338px;width:4px;height:53.5px;background:repeating-linear-gradient(#000 0,#000 1px,transparent 1px,transparent 2.625px);"></div>
<div class="b" style="left:676px;top:387px;width:19px;height:8px;background:#254A9C;border-right:1px solid #A0A0A0;border-bottom:1px solid #A0A0A0;"></div>
<div class="b" style="left:23.8px;top:332px;width:1.6px;height:76px;background:#000;"></div>
<div class="b" style="left:24px;top:407px;width:729px;height:1px;background:#000;"></div>
<svg class="b" style="left:20px;top:322px" width="10" height="13" viewBox="0 0 10 13"><path d="M5 0.5L8.6 12H1.4Z" fill="#000"/></svg>
<svg class="b" style="left:740px;top:403px" width="14" height="6" viewBox="0 0 14 6"><path d="M0 0.5L13.5 5H0Z" fill="#000"/></svg>
<div class="b" style="left:90px;top:408px;width:1px;height:2px;background:#000;"></div>
<span class="t" style="left:75.30px;top:411.20px;font-size:13px;line-height:13px;color:#000;transform:scaleX(0.9351);">1000</span>
<div class="b" style="left:161px;top:408px;width:1px;height:2px;background:#000;"></div>
<span class="t" style="left:145.60px;top:411.20px;font-size:13px;line-height:13px;color:#000;transform:scaleX(0.9351);">1500</span>
<div class="b" style="left:231px;top:408px;width:1px;height:2px;background:#000;"></div>
<span class="t" style="left:215.90px;top:411.20px;font-size:13px;line-height:13px;color:#000;transform:scaleX(0.9351);">2000</span>
<div class="b" style="left:301px;top:408px;width:1px;height:2px;background:#000;"></div>
<span class="t" style="left:286.20px;top:411.20px;font-size:13px;line-height:13px;color:#000;transform:scaleX(0.9351);">2500</span>
<div class="b" style="left:372px;top:408px;width:1px;height:2px;background:#000;"></div>
<span class="t" style="left:356.50px;top:411.20px;font-size:13px;line-height:13px;color:#000;transform:scaleX(0.9351);">3000</span>
<div class="b" style="left:442px;top:408px;width:1px;height:2px;background:#000;"></div>
<span class="t" style="left:426.80px;top:411.20px;font-size:13px;line-height:13px;color:#000;transform:scaleX(0.9351);">3500</span>
<div class="b" style="left:512px;top:408px;width:1px;height:2px;background:#000;"></div>
<span class="t" style="left:497.10px;top:411.20px;font-size:13px;line-height:13px;color:#000;transform:scaleX(0.9351);">4000</span>
<div class="b" style="left:582px;top:408px;width:1px;height:2px;background:#000;"></div>
<span class="t" style="left:567.40px;top:411.20px;font-size:13px;line-height:13px;color:#000;transform:scaleX(0.9351);">4500</span>
<div class="b" style="left:653px;top:408px;width:1px;height:2px;background:#000;"></div>
<span class="t" style="left:637.70px;top:411.20px;font-size:13px;line-height:13px;color:#000;transform:scaleX(0.9351);">5000</span>
<span class="t" style="left:718.00px;top:410.38px;font-size:12.3px;line-height:12.3px;color:#000;font-weight:bold;transform:scaleX(1.1470);">RPM</span>
<div class="b" style="left:9px;top:433px;width:759px;height:19px;background:#F0F0F0;"></div>
<div class="b" style="left:10px;top:435px;width:49px;height:17px;border-top:1px solid #A0A0A0;border-left:1px solid #A0A0A0;border-right:1px solid #fff;border-bottom:1px solid #fff;"></div>
<div class="b" style="left:61px;top:435px;width:47px;height:17px;border-top:1px solid #A0A0A0;border-left:1px solid #A0A0A0;border-right:1px solid #fff;border-bottom:1px solid #fff;"></div>
<div class="b" style="left:111px;top:435px;width:147px;height:17px;border-top:1px solid #A0A0A0;border-left:1px solid #A0A0A0;border-right:1px solid #fff;border-bottom:1px solid #fff;"></div>
<div class="b" style="left:261px;top:435px;width:507px;height:17px;border-top:1px solid #A0A0A0;border-left:1px solid #A0A0A0;border-bottom:1px solid #fff;"></div>
<span class="t" style="left:11.50px;top:436.04px;font-size:15px;line-height:15px;color:#111;transform:scaleX(0.9222);">COM8</span>
<span class="t" style="left:64.00px;top:436.04px;font-size:15px;line-height:15px;color:#111;transform:scaleX(0.9341);">57600</span>
<div class="b" style="left:262px;top:435px;width:490px;height:17px;overflow:hidden;"></div>
<svg class="b" style="left:754px;top:438px" width="14" height="14" viewBox="0 0 14 14"><path d="M13 2L2 13M13 6L6 13M13 10L10 13" stroke="#9A9A9A" stroke-width="1.3"/><path d="M13.8 3L3 13.8M13.8 7L7 13.8M13.8 11L11 13.8" stroke="#fff" stroke-width="1"/></svg>
<span class="t" style="left:374.50px;top:439.84px;font-size:15px;line-height:15px;color:#111;clip-path:inset(0 0 3.2px 0);">Чтение текущих параметров завершено</span>
<div class="b" style="left:0px;top:452px;width:777px;height:9px;background:#F0C869;border:1px solid #B99D52;border-top:none;"></div>
<div class="b" style="left:0px;top:757px;width:961px;height:47.6px;background:rgba(156,131,72,0.62);border-top:1px solid rgba(60,50,20,0.35);"></div>
<div class="b" style="left:0px;top:804.5px;width:961px;height:11px;background:#fff;"></div>
<div class="b" style="left:-48px;top:758px;width:70.4px;height:46px;background:rgba(255,255,255,0.16);border:1px solid rgba(255,255,240,0.25);box-shadow:0 0 0 1px rgba(60,45,10,0.18);"></div>
<div class="b" style="left:25.5px;top:758px;width:69.8px;height:46px;background:rgba(255,255,255,0.16);border:1px solid rgba(255,255,240,0.25);box-shadow:0 0 0 1px rgba(60,45,10,0.18);"></div>
<div class="b" style="left:98.8px;top:758px;width:69.8px;height:46px;background:rgba(255,255,255,0.16);border:1px solid rgba(255,255,240,0.25);box-shadow:0 0 0 1px rgba(60,45,10,0.18);"></div>
<div class="b" style="left:171.7px;top:758px;width:69.60000000000002px;height:46px;background:rgba(255,255,255,0.16);border:1px solid rgba(255,255,240,0.25);box-shadow:0 0 0 1px rgba(60,45,10,0.18);"></div>
<div class="b" style="left:244.9px;top:758px;width:69.6px;height:46px;background:rgba(255,255,255,0.16);border:1px solid rgba(255,255,240,0.25);box-shadow:0 0 0 1px rgba(60,45,10,0.18);"></div>
<div class="b" style="left:317.7px;top:758px;width:69.30000000000001px;height:46px;background:rgba(255,255,255,0.16);border:1px solid rgba(255,255,240,0.25);box-shadow:0 0 0 1px rgba(60,45,10,0.18);"></div>
<div class="b" style="left:390.9px;top:758px;width:69.10000000000002px;height:46px;background:rgba(255,255,255,0.16);border:1px solid rgba(255,255,240,0.25);box-shadow:0 0 0 1px rgba(60,45,10,0.18);"></div>
<div class="b" style="left:463.7px;top:758px;width:69.6px;height:46px;background:linear-gradient(rgba(255,255,255,0.40),rgba(255,255,255,0.62));border:1px solid rgba(255,255,250,0.85);"></div>
<svg class="b" style="left:477.40px;top:760.50px" width="40.80" height="40.80" viewBox="477.40 760.50 40.80 40.80"><defs><linearGradient id="gg2" x1="0" y1="0" x2="1" y2="1"><stop offset="0" stop-color="#c8c8c8"/><stop offset="0.4" stop-color="#6e6e6e"/><stop offset="1" stop-color="#3c3c3c"/></linearGradient></defs><path d="M493.10 770.41 L493.72 762.96 L501.88 762.96 L502.50 770.41 L502.30 770.32 L502.10 770.23 L501.89 770.15 L507.60 765.33 L513.37 771.10 L508.55 776.81 L508.47 776.60 L508.38 776.40 L508.29 776.20 L515.74 776.82 L515.74 784.98 L508.29 785.60 L508.38 785.40 L508.47 785.20 L508.55 784.99 L513.37 790.70 L507.60 796.47 L501.89 791.65 L502.10 791.57 L502.30 791.48 L502.50 791.39 L501.88 798.84 L493.72 798.84 L493.10 791.39 L493.30 791.48 L493.50 791.57 L493.71 791.65 L488.00 796.47 L482.23 790.70 L487.05 784.99 L487.13 785.20 L487.22 785.40 L487.31 785.60 L479.86 784.98 L479.86 776.82 L487.31 776.20 L487.22 776.40 L487.13 776.60 L487.05 776.81 L489.67 772.77 L493.71 770.15 L493.50 770.23 L493.30 770.32ZM489.23 780.90a8.57 8.57 0 1 0 17.15 0a8.57 8.57 0 1 0 -17.15 0Z" fill="#0c0c0c" fill-rule="evenodd"/><path d="M494.66 770.74 L495.29 764.26 L500.31 764.26 L500.94 770.74 L501.56 770.95 L502.17 771.20 L502.77 771.49 L507.79 767.36 L511.34 770.91 L507.21 775.93 L507.50 776.53 L507.75 777.14 L507.96 777.76 L514.44 778.39 L514.44 783.41 L507.96 784.04 L507.75 784.66 L507.50 785.27 L507.21 785.87 L511.34 790.89 L507.79 794.44 L502.77 790.31 L502.17 790.60 L501.56 790.85 L500.94 791.06 L500.31 797.54 L495.29 797.54 L494.66 791.06 L494.04 790.85 L493.43 790.60 L492.83 790.31 L487.81 794.44 L484.26 790.89 L488.39 785.87 L488.10 785.27 L487.85 784.66 L487.64 784.04 L481.16 783.41 L481.16 778.39 L487.64 777.76 L487.85 777.14 L488.10 776.53 L488.39 775.93 L490.28 773.38 L492.83 771.49 L493.43 771.20 L494.04 770.95ZM488.29 780.90a9.51 9.51 0 1 0 19.03 0a9.51 9.51 0 1 0 -19.03 0Z" fill="url(#gg2)" fill-rule="evenodd"/><path d="M487.11 781.48A10.69 10.69 0 0 1 497.23 770.20" stroke="#fff" stroke-width="1.57" fill="none" opacity="0.95"/></svg>
<svg class="b" style="left:0;top:757px" width="540" height="48" viewBox="0 757 540 48"><defs><linearGradient id="tb1" x1="0" y1="0" x2="1" y2="0"><stop offset="0" stop-color="#e6e6ea"/><stop offset="1" stop-color="#c9c9d0"/></linearGradient><linearGradient id="tb2" x1="0" y1="0" x2="1" y2="0"><stop offset="0" stop-color="#a9a9b2"/><stop offset="0.6" stop-color="#d9d9de"/><stop offset="1" stop-color="#c4c4cc"/></linearGradient><linearGradient id="tb3" x1="0" y1="0" x2="0.3" y2="1"><stop offset="0" stop-color="#b9c6d2"/><stop offset="1" stop-color="#7d92a6"/></linearGradient><linearGradient id="tb4" x1="0" y1="0" x2="1" y2="1"><stop offset="0" stop-color="#e4ecfb"/><stop offset="1" stop-color="#b4c8f0"/></linearGradient></defs><path d="M-6 762.5H3Q5.3 762.5 5.3 765V797Q5.3 799.3 3 799.3H-6Z" fill="#1c3ea9"/><rect x="-3" y="778" width="5.6" height="19" fill="#fff"/><g fill="#19a5de"><circle cx="51" cy="771.4" r="9.4"/><circle cx="68.8" cy="790" r="9.4"/><circle cx="59.9" cy="780.7" r="16.4"/></g><g fill="#fff"><circle cx="51" cy="771.4" r="7.3"/><circle cx="68.8" cy="790" r="7.3"/><circle cx="59.9" cy="780.7" r="14.3"/></g><text x="59.9" y="791.7" text-anchor="middle" font-family="Liberation Sans, sans-serif" font-weight="bold" font-size="28.5" fill="#19a5de">S</text><circle cx="72.8" cy="793.6" r="7.2" fill="#fff"/><circle cx="72.8" cy="793.6" r="6.2" fill="#e0142c"/><path d="M70.2 791L75.4 796.2M75.4 791L70.2 796.2" stroke="#fff" stroke-width="1.7"/><path d="M135 770.4H150.6V791H135Z" fill="#fff" stroke="#0f6fc6" stroke-width="1.6"/><path d="M135.5 771L143 779L150.2 771" fill="none" stroke="#0f6fc6" stroke-width="1.6"/><path d="M115.5 766.8L135.2 762.6V798.8L115.5 794Z" fill="#0f6fc6"/><ellipse cx="124.9" cy="781.3" rx="4.6" ry="6.4" fill="none" stroke="#fff" stroke-width="2.7"/><path d="M143.3 783.6L152.3 799.6H134.6Z" fill="#f2ac66" stroke="#f5c48f" stroke-width="0.8"/><path d="M143.4 788.3V794.6" stroke="#5a3a1a" stroke-width="1.7"/><rect x="142.5" y="795.8" width="1.8" height="1.8" fill="#5a3a1a"/><rect x="192.6" y="767.4" width="23.2" height="25.4" rx="1.5" fill="url(#tb4)" stroke="#5b80d2" stroke-width="1.1"/><path d="M192.6 775.6H215.8M192.6 783.8H215.8M204.2 767.4V792.8" stroke="#7d9be0" stroke-width="1" fill="none"/><circle cx="211" cy="785.9" r="9" fill="#2cb61e" stroke="#1b8f12" stroke-width="1"/><path d="M207.8 780.7L216.2 785.9L207.8 791.1Z" fill="#fff"/><g fill="#1aa7e0"><circle cx="270.3" cy="769.5" r="8"/><circle cx="278.2" cy="779.6" r="15"/><circle cx="288.8" cy="791" r="9.3"/></g><text x="278.4" y="792" text-anchor="middle" font-family="Liberation Sans, sans-serif" font-weight="bold" font-size="31.5" fill="#fff">S</text><circle cx="288.8" cy="791" r="9.3" fill="#1aa7e0"/><path d="M284.3 789.6A4.6 4.6 0 0 1 292.6 788.2M293.3 792.4A4.6 4.6 0 0 1 285 793.8" stroke="#fff" stroke-width="1.7" fill="none"/><path d="M293.9 786L293.7 789.6L290.3 788.4ZM283.7 796L283.9 792.4L287.3 793.6Z" fill="#fff"/><rect x="350.7" y="761.4" width="18" height="12.6" rx="1" fill="#d6d6d6" stroke="#000" stroke-width="1"/><rect x="353.7" y="763.6999999999999" width="11.5" height="8" fill="#0a12dc" stroke="#000" stroke-width="0.8"/><path d="M354.2 774H373.7L371.7 779.8H352.2Z" fill="#e4e4e4" stroke="#000" stroke-width="1"/><path d="M364.2 777.6H369.2" stroke="#777" stroke-width="1"/><rect x="335" y="782.3" width="18" height="12.6" rx="1" fill="#d6d6d6" stroke="#000" stroke-width="1"/><rect x="338" y="784.5999999999999" width="11.5" height="8" fill="#0a12dc" stroke="#000" stroke-width="0.8"/><path d="M334.4 794H353.9L351.9 799.8H332.4Z" fill="#e4e4e4" stroke="#000" stroke-width="1"/><path d="M344.4 797.6H349.4" stroke="#777" stroke-width="1"/><path d="M361 767.5L347.3 778.9L352.3 779.4L342.2 789.6L357.6 778.3L352.6 777.8Z" fill="#ffff00" stroke="#3a3a00" stroke-width="0.6"/><path d="M436 788L441.5 786.5V791L436.5 792.5Z" fill="#2a241a"/><rect x="414.3" y="761.6" width="12.6" height="22" fill="url(#tb1)"/><path d="M426.9 761.6H438.8Q440.2 761.6 440.2 763V788L426.9 790Z" fill="url(#tb2)"/><rect x="416" y="765.8" width="6.2" height="12" fill="#fbfbfb"/><rect x="417" y="766.2" width="4.2" height="3.6" fill="#3c9a3c"/><path d="M405.2 783.5L409.5 780H432L434.8 784V797L431 800H408L405.2 796Z" fill="url(#tb3)"/><path d="M405.2 784.5H434.6" stroke="#dbe4ec" stroke-width="0.9"/><path d="M414.5 781.5Q415.5 778.4 418 778.4H422.5Q424.8 778.4 425.4 781.5" fill="none" stroke="#1c1c1c" stroke-width="1.3"/><rect x="409.6" y="786" width="1.6" height="4.6" fill="#e8eef2"/><rect x="420" y="788" width="1.6" height="4.6" fill="#e8eef2"/></svg>
</body></html>
